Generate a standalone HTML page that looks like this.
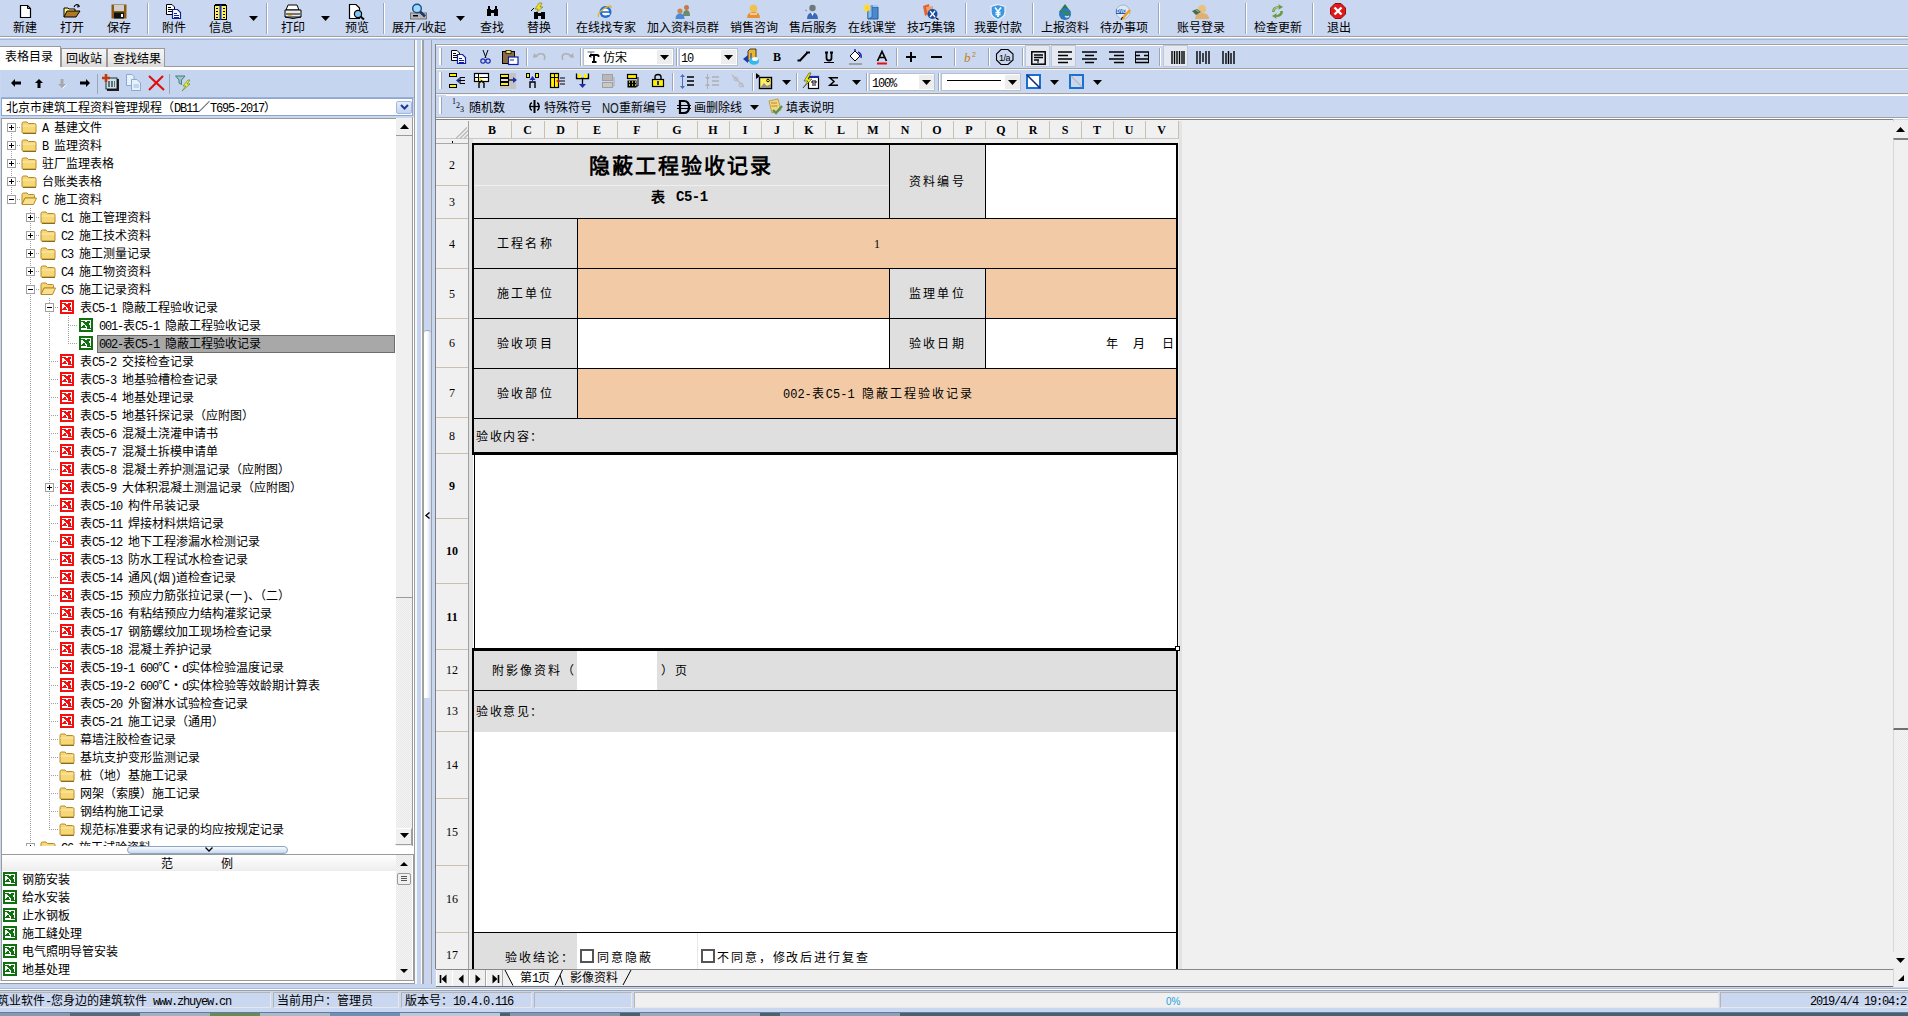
<!DOCTYPE html><html lang="zh-CN"><head><meta charset="utf-8"><style>
*{margin:0;padding:0;box-sizing:border-box}
html,body{width:1908px;height:1016px;overflow:hidden}
body{position:relative;background:#CAD7F0;font-family:"Liberation Sans",sans-serif;font-size:12px;color:#000;line-height:12px}
.a{position:absolute}
.t{white-space:nowrap;line-height:12px;margin-top:1px}
i.m{font-style:normal;font-family:"Liberation Mono",monospace;font-size:12px;letter-spacing:-1.2px}
svg{position:absolute;overflow:visible}
</style></head><body><div class="a" style="left:0px;top:0px;width:1908px;height:36px;background:#CAD7F0"></div>
<div class="a" style="left:0px;top:36px;width:1908px;height:1px;background:#A0A0A0"></div>
<div class="a" style="left:0px;top:37px;width:1908px;height:2px;background:#fff"></div>
<div class="a" style="left:0px;top:38px;width:1908px;height:6px;background:#C6D4EE"></div>
<div class="a" style="left:0px;top:39px;width:1908px;height:1px;background:#A8B8D8"></div>
<div class="a" style="left:0px;top:43px;width:1908px;height:1px;background:#CCDAF4"></div>
<div class="a t" style="left:13px;top:21px;">新建</div>
<div class="a t" style="left:60px;top:21px;">打开</div>
<div class="a t" style="left:107px;top:21px;">保存</div>
<div class="a t" style="left:162px;top:21px;">附件</div>
<div class="a t" style="left:209px;top:21px;">信息</div>
<div class="a t" style="left:281px;top:21px;">打印</div>
<div class="a t" style="left:345px;top:21px;">预览</div>
<div class="a t" style="left:392px;top:21px;">展开<i class="m">/</i>收起</div>
<div class="a t" style="left:480px;top:21px;">查找</div>
<div class="a t" style="left:527px;top:21px;">替换</div>
<div class="a t" style="left:576px;top:21px;">在线找专家</div>
<div class="a t" style="left:647px;top:21px;">加入资料员群</div>
<div class="a t" style="left:730px;top:21px;">销售咨询</div>
<div class="a t" style="left:789px;top:21px;">售后服务</div>
<div class="a t" style="left:848px;top:21px;">在线课堂</div>
<div class="a t" style="left:907px;top:21px;">技巧集锦</div>
<div class="a t" style="left:974px;top:21px;">我要付款</div>
<div class="a t" style="left:1041px;top:21px;">上报资料</div>
<div class="a t" style="left:1100px;top:21px;">待办事项</div>
<div class="a t" style="left:1177px;top:21px;">账号登录</div>
<div class="a t" style="left:1254px;top:21px;">检查更新</div>
<div class="a t" style="left:1327px;top:21px;">退出</div>
<div class="a" style="left:147px;top:3px;width:1px;height:31px;background:#9DA6B8;border-right:1px solid #fff;width:2px"></div>
<div class="a" style="left:266px;top:3px;width:1px;height:31px;background:#9DA6B8;border-right:1px solid #fff;width:2px"></div>
<div class="a" style="left:383px;top:3px;width:1px;height:31px;background:#9DA6B8;border-right:1px solid #fff;width:2px"></div>
<div class="a" style="left:566px;top:3px;width:1px;height:31px;background:#9DA6B8;border-right:1px solid #fff;width:2px"></div>
<div class="a" style="left:965px;top:3px;width:1px;height:31px;background:#9DA6B8;border-right:1px solid #fff;width:2px"></div>
<div class="a" style="left:1032px;top:3px;width:1px;height:31px;background:#9DA6B8;border-right:1px solid #fff;width:2px"></div>
<div class="a" style="left:1158px;top:3px;width:1px;height:31px;background:#9DA6B8;border-right:1px solid #fff;width:2px"></div>
<div class="a" style="left:1245px;top:3px;width:1px;height:31px;background:#9DA6B8;border-right:1px solid #fff;width:2px"></div>
<div class="a" style="left:1312px;top:3px;width:1px;height:31px;background:#9DA6B8;border-right:1px solid #fff;width:2px"></div>
<svg style="left:249px;top:16px" width="10" height="5"><path d="M0 0H9L4.5 5Z" fill="#000"/></svg>
<svg style="left:321px;top:16px" width="10" height="5"><path d="M0 0H9L4.5 5Z" fill="#000"/></svg>
<svg style="left:456px;top:16px" width="10" height="5"><path d="M0 0H9L4.5 5Z" fill="#000"/></svg>
<svg style="left:19px;top:4px" width="14" height="15" viewBox="0 0 14 15"><path d="M1.5 1.5H8.5L11.5 4.5V13.5H1.5Z" fill="#fff" stroke="#000" stroke-width="1.2"/><path d="M8.5 1.5V4.5H11.5" fill="none" stroke="#000" stroke-width="1"/></svg>
<svg style="left:63px;top:3px" width="18" height="16" viewBox="0 0 18 16"><path d="M11 4Q13 0 16 3" stroke="#000" stroke-width="1.2" fill="none"/><path d="M15 1.5L16.5 3.5L14 4" stroke="#000" stroke-width="1" fill="none"/><path d="M1 14V5H5L6 6H12V8" fill="#FFF37A" stroke="#000" stroke-width="1"/><path d="M1 14L4 8H17L13 14Z" fill="#B07820" stroke="#000" stroke-width="1"/></svg>
<svg style="left:111px;top:4px" width="16" height="15" viewBox="0 0 16 15"><rect x="0.5" y="0.5" width="15" height="14" fill="#8A5A10"/><rect x="3" y="1" width="10" height="6" fill="#CFCFCF"/><rect x="3" y="8.5" width="10" height="6" fill="#111"/><rect x="10" y="10" width="2" height="3" fill="#fff"/></svg>
<svg style="left:166px;top:4px" width="16" height="15" viewBox="0 0 16 15"><path d="M0.5 0.5H6L8.5 3V10.5H0.5Z" fill="#fff" stroke="#000"/><path d="M2 3.5H5M2 5.5H7M2 7.5H7" stroke="#000"/><path d="M6.5 5.5H11.5L14.5 8.5V14.5H6.5Z" fill="#fff" stroke="#1020A0" stroke-width="1.2"/><path d="M8 9.5H11M8 11.5H13M8 13.5H13" stroke="#1020A0"/></svg>
<svg style="left:214px;top:4px" width="13" height="16" viewBox="0 0 13 16"><rect x="0.5" y="1.5" width="12" height="14" fill="#FFF060" stroke="#000"/><rect x="5.5" y="1" width="2" height="15" fill="#1030C0"/><path d="M2 4.5H4M2 7.5H4M2 10.5H4M2 13.5H4M9 4.5H11M9 7.5H11M9 10.5H11M9 13.5H11" stroke="#000"/><path d="M1 0.5H12" stroke="#000"/></svg>
<svg style="left:284px;top:4px" width="18" height="16" viewBox="0 0 18 16"><path d="M4 1H13L15 6H2Z" fill="#fff" stroke="#000"/><path d="M1 6H17V13H1Z" fill="#E8E8E8" stroke="#000"/><path d="M2 10H16" stroke="#000"/><rect x="4" y="11" width="4" height="1" fill="#F0C000"/><path d="M1 13Q9 16 17 13" stroke="#000" fill="none"/></svg>
<svg style="left:348px;top:4px" width="18" height="16" viewBox="0 0 18 16"><path d="M1.5 0.5H8L11.5 4V14.5H1.5Z" fill="#fff" stroke="#000" stroke-width="1.2"/><circle cx="10" cy="10" r="3.6" fill="#7EC4F0" stroke="#000" stroke-width="1.2"/><path d="M12.5 12.5L16 15.5" stroke="#000" stroke-width="2"/></svg>
<svg style="left:410px;top:3px" width="18" height="17" viewBox="0 0 18 17"><rect x="0.5" y="10" width="16" height="6" fill="#B8B8B8" stroke="#777"/><rect x="3" y="12" width="5" height="1.5" fill="#000"/><circle cx="7" cy="5.5" r="4.3" fill="#9ED8FA" stroke="#1A4A8A" stroke-width="1.4"/><path d="M10 8.5L15 13.5" stroke="#1A3A6A" stroke-width="2.6"/></svg>
<svg style="left:486px;top:6px" width="13" height="11" viewBox="0 0 13 11"><path d="M1 3H5V10H1ZM8 3H12V10H8Z" fill="#000"/><rect x="2" y="0" width="2" height="3" fill="#000"/><rect x="9" y="0" width="2" height="3" fill="#000"/><rect x="4" y="4" width="5" height="3" fill="#000"/></svg>
<svg style="left:530px;top:3px" width="18" height="17" viewBox="0 0 18 17"><path d="M9 0L5 6H8L6 10L13 4H10L12 0Z" fill="#F0E020" stroke="#606000" stroke-width="0.5"/><path d="M4 9H8V16H4ZM11 9H15V16H11Z" fill="#000"/><rect x="7" y="10" width="5" height="3" fill="#000"/><path d="M1 8L4 5" stroke="#000"/></svg>
<svg style="left:597px;top:4px" width="16" height="15" viewBox="0 0 16 15"><circle cx="8.5" cy="8" r="6" fill="#1E6ED8"/><circle cx="8.5" cy="8" r="3.5" fill="#fff"/><rect x="5" y="7.2" width="7" height="1.6" fill="#1E6ED8"/><rect x="8.5" y="9" width="4" height="2" fill="#fff"/><path d="M1.5 13Q0 9 8 4Q15 0 14 4" stroke="#F0B020" stroke-width="1.4" fill="none"/></svg>
<svg style="left:675px;top:4px" width="16" height="15" viewBox="0 0 16 15"><circle cx="11.5" cy="3.5" r="2.5" fill="#C87848"/><path d="M8 12Q8 6 11.5 6Q15 6 15 12Z" fill="#6A8A6A"/><circle cx="5" cy="7" r="2.6" fill="#C8884A"/><path d="M0.5 15Q0.5 9.5 5 9.5Q9.5 9.5 9.5 15Z" fill="#4A8ADA"/></svg>
<svg style="left:746px;top:4px" width="15" height="15" viewBox="0 0 15 15"><circle cx="7.5" cy="4.5" r="3.8" fill="#F0C050"/><path d="M1 14Q1 8 7.5 8Q14 8 14 14Z" fill="#E89030"/><path d="M4 10H11" stroke="#fff" stroke-width="1"/></svg>
<svg style="left:805px;top:4px" width="14" height="16" viewBox="0 0 14 16"><circle cx="7.5" cy="4" r="3.2" fill="#6A7A7A"/><path d="M2 15Q2 8.5 7.5 8.5Q13 8.5 13 15Z" fill="#3A6AB8"/><path d="M6 8.5L7.5 12L9 8.5" fill="#fff"/><path d="M0 6L2 7" stroke="#888"/></svg>
<svg style="left:863px;top:4px" width="16" height="16" viewBox="0 0 16 16"><path d="M5 3H15V15H5Z" fill="#4A8AD0" stroke="#2A5A98"/><path d="M5 3L9 1H15V3" fill="#9AC8F0"/><path d="M5 3V15L9 13V1" fill="#8AC0F0" stroke="#2A5A98" stroke-width="0.7"/><circle cx="4" cy="4" r="3" fill="#FFE060"/><path d="M0 4H8M4 0V8M1 1L7 7M7 1L1 7" stroke="#FFD000" stroke-width="0.8"/></svg>
<svg style="left:922px;top:4px" width="17" height="16" viewBox="0 0 17 16"><path d="M1 2L7 0L8 9L3 12Z" fill="#E86030"/><path d="M4 3L11 2L11 11L6 12Z" fill="#E8A070"/><circle cx="10.5" cy="10" r="5" fill="#1A4AA0"/><path d="M8 7L13 13M13 7L8 13" stroke="#fff" stroke-width="1.2"/><path d="M14 14L16.5 15.5" stroke="#000" stroke-width="1.4"/></svg>
<svg style="left:990px;top:4px" width="16" height="16" viewBox="0 0 16 16"><path d="M8 0.5L15 2.5V8Q15 13 8 15.5Q1 13 1 8V2.5Z" fill="#3A98E0" stroke="#E8F0F8" stroke-width="1.3"/><path d="M5 3.5L8 7.5L11 3.5M8 7.5V13M5.5 8.5H10.5M5.5 10.5H10.5" stroke="#fff" stroke-width="1.6" fill="none"/></svg>
<svg style="left:1057px;top:4px" width="16" height="16" viewBox="0 0 16 16"><path d="M8 0L14 8H2Z" fill="#2A7A40"/><circle cx="8" cy="10" r="6" fill="#2A78C8"/><path d="M3 8Q6 6 8 9Q10 12 13 9" fill="#3A8A3A" stroke="#3A8A3A" stroke-width="2"/><path d="M8 12Q10 14 12 12" stroke="#E0E0E0" stroke-width="1.2" fill="none"/></svg>
<svg style="left:1115px;top:4px" width="17" height="16" viewBox="0 0 17 16"><circle cx="8" cy="8" r="7" fill="#E0E8F0" stroke="#A0B8D0"/><rect x="1" y="5" width="10" height="5" fill="#1E58B8"/><text x="1.6" y="9.3" font-size="4.6" font-family="Liberation Sans" font-weight="bold" fill="#fff">DVD</text><path d="M7 15L15 6" stroke="#F0A020" stroke-width="2.6"/><path d="M6 16L7.5 13" stroke="#000"/></svg>
<svg style="left:1192px;top:4px" width="17" height="16" viewBox="0 0 17 16"><circle cx="10" cy="5" r="4" fill="#E8C080"/><path d="M3 15Q3 9 10 9Q17 9 17 15Z" fill="#E0B070"/><path d="M0 7L5 5L9 8L4 11Z" fill="#4A6A4A"/><path d="M4 6L7 8" stroke="#9AC09A"/></svg>
<svg style="left:1270px;top:4px" width="15" height="15" viewBox="0 0 15 15"><path d="M2 8Q2 2 9 2L8 0L13 3L8 6L9 4Q5 4 4.5 8Z" fill="#6A9A40"/><path d="M13 7Q13 13 6 13L7 15L2 12L7 9L6 11Q10 11 10.5 7Z" fill="#6A9A40"/><path d="M3 7Q4 3 9 3" stroke="#B8D890" stroke-width="0.8" fill="none"/></svg>
<svg style="left:1330px;top:3px" width="16" height="17" viewBox="0 0 16 17"><path d="M5 0.5H11L15.5 5V11L11 15.5H5L0.5 11V5Z" fill="#E01818" stroke="#901010"/><path d="M4.5 4.5L11.5 11.5M11.5 4.5L4.5 11.5" stroke="#fff" stroke-width="2.4"/></svg>
<div class="a" style="left:0px;top:40px;width:414px;height:950px;background:#CAD7F0"></div>
<div class="a" style="left:0px;top:46px;width:61px;height:21px;background:#fff;border-top:1px solid #9A9A9A;border-right:1px solid #9A9A9A"></div>
<div class="a t" style="left:5px;top:50px;">表格目录</div>
<div class="a" style="left:61px;top:48px;width:46px;height:19px;background:linear-gradient(#F4F4F4,#EAEAEA 60%,#D8D8D8);border:1px solid #9A9A9A;border-bottom:none"></div>
<div class="a t" style="left:66px;top:52px;">回收站</div>
<div class="a" style="left:107px;top:48px;width:58px;height:19px;background:linear-gradient(#F4F4F4,#EAEAEA 60%,#D8D8D8);border:1px solid #9A9A9A;border-bottom:none"></div>
<div class="a t" style="left:113px;top:52px;">查找结果</div>
<div class="a" style="left:165px;top:66px;width:249px;height:1px;background:#9A9A9A"></div>
<div class="a" style="left:0px;top:67px;width:414px;height:3px;background:#fff"></div>
<div class="a" style="left:1px;top:70px;width:413px;height:27px;background:#C6D5EF"></div>
<div class="a" style="left:97px;top:74px;width:1px;height:20px;background:#9DA6B8"></div>
<div class="a" style="left:169px;top:74px;width:1px;height:20px;background:#9DA6B8"></div>
<svg style="left:11px;top:79px" width="10" height="8" viewBox="0 0 10 8"><path d="M0 4L4 0V2.5H10V5.5H4V8Z" fill="#000"/></svg>
<svg style="left:35px;top:79px" width="8" height="9" viewBox="0 0 8 9"><path d="M4 0L8 4H5.5V9H2.5V4H0Z" fill="#000"/></svg>
<svg style="left:58px;top:79px" width="9" height="10" viewBox="0 0 9 10"><path d="M4 9L8 5H5.5V0H2.5V5H0Z" fill="#A8A8A8"/><path d="M4.5 9.5L8.5 5.5" stroke="#fff"/></svg>
<svg style="left:80px;top:79px" width="10" height="8" viewBox="0 0 10 8"><path d="M10 4L6 0V2.5H0V5.5H6V8Z" fill="#000"/></svg>
<svg style="left:102px;top:74px" width="18" height="17" viewBox="0 0 18 17"><rect x="5" y="5" width="12" height="12" fill="#202020"/><rect x="4" y="4" width="11" height="11" fill="#C8E0E8" stroke="#000" stroke-width="0.8"/><path d="M6 8H13M6 10H13M6 12H13" stroke="#000" stroke-width="1.2" stroke-dasharray="2 1"/><path d="M0 4H8M4 0V8" stroke="#C03A10" stroke-width="2.6"/></svg>
<svg style="left:126px;top:74px" width="16" height="17" viewBox="0 0 16 17"><path d="M0.5 0.5H6L8 2.5V11.5H0.5Z" fill="#E8F0FA" stroke="#8AA8D0"/><path d="M5.5 5.5H11L14.5 9V16.5H5.5Z" fill="#E8F0FA" stroke="#8AA8D0"/><path d="M7.5 11H13M7.5 13H13" stroke="#90C0E8" stroke-width="1.2"/></svg>
<svg style="left:148px;top:75px" width="17" height="16" viewBox="0 0 17 16"><path d="M1 1L16 15M15 1L1 15" stroke="#E01010" stroke-width="2.2"/></svg>
<svg style="left:175px;top:75px" width="17" height="16" viewBox="0 0 17 16"><path d="M0.5 1H10L6.5 5V9.5L4 8V5Z" fill="#98C8C8" stroke="#4A7A7A"/><path d="M13 5L8 11H11L7 16L15 9H12L15 5Z" fill="#F0F040" stroke="#6A8A20" stroke-width="0.7"/></svg>
<div class="a" style="left:1px;top:97px;width:413px;height:1px;background:#9AB0D8"></div>
<div class="a" style="left:1px;top:98px;width:412px;height:18px;background:#fff;border:1px solid #8CA6D0"></div>
<div class="a t" style="left:6px;top:101px;">北京市建筑工程资料管理规程（<i class="m">DB11</i>／<i class="m">T695-2017</i>）</div>
<div class="a" style="left:396px;top:101px;width:16px;height:13px;background:linear-gradient(#E6EEFA,#C2D3EE);border:1px solid #A4B9DC;border-radius:2px"></div>
<svg style="left:400px;top:104px" width="9" height="6"><path d="M1 1L4.5 4.5L8 1" stroke="#1A3A9A" stroke-width="2" fill="none"/></svg>
<div class="a" style="left:1px;top:118px;width:413px;height:728px;background:#fff;border:1px solid #9A9A9A;border-bottom:none"></div>
<div class="a" style="left:2px;top:119px;width:394px;height:727px;overflow:hidden">
<div class="a" style="left:-2px;top:-119px;width:400px;height:1000px">
<div class="a" style="left:11px;top:127px;width:1px;height:18px;background:repeating-linear-gradient(#A0A0A0 0 1px,transparent 1px 2px)"></div>
<div class="a" style="left:11px;top:127px;width:9px;height:1px;background:repeating-linear-gradient(90deg,#A0A0A0 0 1px,transparent 1px 2px)"></div>
<div class="a" style="left:11px;top:145px;width:1px;height:18px;background:repeating-linear-gradient(#A0A0A0 0 1px,transparent 1px 2px)"></div>
<div class="a" style="left:11px;top:145px;width:9px;height:1px;background:repeating-linear-gradient(90deg,#A0A0A0 0 1px,transparent 1px 2px)"></div>
<div class="a" style="left:11px;top:163px;width:1px;height:18px;background:repeating-linear-gradient(#A0A0A0 0 1px,transparent 1px 2px)"></div>
<div class="a" style="left:11px;top:163px;width:9px;height:1px;background:repeating-linear-gradient(90deg,#A0A0A0 0 1px,transparent 1px 2px)"></div>
<div class="a" style="left:11px;top:181px;width:1px;height:18px;background:repeating-linear-gradient(#A0A0A0 0 1px,transparent 1px 2px)"></div>
<div class="a" style="left:11px;top:181px;width:9px;height:1px;background:repeating-linear-gradient(90deg,#A0A0A0 0 1px,transparent 1px 2px)"></div>
<div class="a" style="left:11px;top:199px;width:9px;height:1px;background:repeating-linear-gradient(90deg,#A0A0A0 0 1px,transparent 1px 2px)"></div>
<div class="a" style="left:30px;top:217px;width:1px;height:18px;background:repeating-linear-gradient(#A0A0A0 0 1px,transparent 1px 2px)"></div>
<div class="a" style="left:30px;top:208px;width:1px;height:9px;background:repeating-linear-gradient(#A0A0A0 0 1px,transparent 1px 2px)"></div>
<div class="a" style="left:30px;top:217px;width:9px;height:1px;background:repeating-linear-gradient(90deg,#A0A0A0 0 1px,transparent 1px 2px)"></div>
<div class="a" style="left:30px;top:235px;width:1px;height:18px;background:repeating-linear-gradient(#A0A0A0 0 1px,transparent 1px 2px)"></div>
<div class="a" style="left:30px;top:235px;width:9px;height:1px;background:repeating-linear-gradient(90deg,#A0A0A0 0 1px,transparent 1px 2px)"></div>
<div class="a" style="left:30px;top:253px;width:1px;height:18px;background:repeating-linear-gradient(#A0A0A0 0 1px,transparent 1px 2px)"></div>
<div class="a" style="left:30px;top:253px;width:9px;height:1px;background:repeating-linear-gradient(90deg,#A0A0A0 0 1px,transparent 1px 2px)"></div>
<div class="a" style="left:30px;top:271px;width:1px;height:18px;background:repeating-linear-gradient(#A0A0A0 0 1px,transparent 1px 2px)"></div>
<div class="a" style="left:30px;top:271px;width:9px;height:1px;background:repeating-linear-gradient(90deg,#A0A0A0 0 1px,transparent 1px 2px)"></div>
<div class="a" style="left:30px;top:289px;width:1px;height:558px;background:repeating-linear-gradient(#A0A0A0 0 1px,transparent 1px 2px)"></div>
<div class="a" style="left:30px;top:289px;width:9px;height:1px;background:repeating-linear-gradient(90deg,#A0A0A0 0 1px,transparent 1px 2px)"></div>
<div class="a" style="left:49px;top:307px;width:1px;height:54px;background:repeating-linear-gradient(#A0A0A0 0 1px,transparent 1px 2px)"></div>
<div class="a" style="left:49px;top:298px;width:1px;height:9px;background:repeating-linear-gradient(#A0A0A0 0 1px,transparent 1px 2px)"></div>
<div class="a" style="left:49px;top:307px;width:9px;height:1px;background:repeating-linear-gradient(90deg,#A0A0A0 0 1px,transparent 1px 2px)"></div>
<div class="a" style="left:68px;top:325px;width:1px;height:18px;background:repeating-linear-gradient(#A0A0A0 0 1px,transparent 1px 2px)"></div>
<div class="a" style="left:68px;top:316px;width:1px;height:9px;background:repeating-linear-gradient(#A0A0A0 0 1px,transparent 1px 2px)"></div>
<div class="a" style="left:68px;top:325px;width:9px;height:1px;background:repeating-linear-gradient(90deg,#A0A0A0 0 1px,transparent 1px 2px)"></div>
<div class="a" style="left:68px;top:343px;width:9px;height:1px;background:repeating-linear-gradient(90deg,#A0A0A0 0 1px,transparent 1px 2px)"></div>
<div class="a" style="left:49px;top:361px;width:1px;height:18px;background:repeating-linear-gradient(#A0A0A0 0 1px,transparent 1px 2px)"></div>
<div class="a" style="left:49px;top:361px;width:9px;height:1px;background:repeating-linear-gradient(90deg,#A0A0A0 0 1px,transparent 1px 2px)"></div>
<div class="a" style="left:49px;top:379px;width:1px;height:18px;background:repeating-linear-gradient(#A0A0A0 0 1px,transparent 1px 2px)"></div>
<div class="a" style="left:49px;top:379px;width:9px;height:1px;background:repeating-linear-gradient(90deg,#A0A0A0 0 1px,transparent 1px 2px)"></div>
<div class="a" style="left:49px;top:397px;width:1px;height:18px;background:repeating-linear-gradient(#A0A0A0 0 1px,transparent 1px 2px)"></div>
<div class="a" style="left:49px;top:397px;width:9px;height:1px;background:repeating-linear-gradient(90deg,#A0A0A0 0 1px,transparent 1px 2px)"></div>
<div class="a" style="left:49px;top:415px;width:1px;height:18px;background:repeating-linear-gradient(#A0A0A0 0 1px,transparent 1px 2px)"></div>
<div class="a" style="left:49px;top:415px;width:9px;height:1px;background:repeating-linear-gradient(90deg,#A0A0A0 0 1px,transparent 1px 2px)"></div>
<div class="a" style="left:49px;top:433px;width:1px;height:18px;background:repeating-linear-gradient(#A0A0A0 0 1px,transparent 1px 2px)"></div>
<div class="a" style="left:49px;top:433px;width:9px;height:1px;background:repeating-linear-gradient(90deg,#A0A0A0 0 1px,transparent 1px 2px)"></div>
<div class="a" style="left:49px;top:451px;width:1px;height:18px;background:repeating-linear-gradient(#A0A0A0 0 1px,transparent 1px 2px)"></div>
<div class="a" style="left:49px;top:451px;width:9px;height:1px;background:repeating-linear-gradient(90deg,#A0A0A0 0 1px,transparent 1px 2px)"></div>
<div class="a" style="left:49px;top:469px;width:1px;height:18px;background:repeating-linear-gradient(#A0A0A0 0 1px,transparent 1px 2px)"></div>
<div class="a" style="left:49px;top:469px;width:9px;height:1px;background:repeating-linear-gradient(90deg,#A0A0A0 0 1px,transparent 1px 2px)"></div>
<div class="a" style="left:49px;top:487px;width:1px;height:18px;background:repeating-linear-gradient(#A0A0A0 0 1px,transparent 1px 2px)"></div>
<div class="a" style="left:49px;top:487px;width:9px;height:1px;background:repeating-linear-gradient(90deg,#A0A0A0 0 1px,transparent 1px 2px)"></div>
<div class="a" style="left:49px;top:505px;width:1px;height:18px;background:repeating-linear-gradient(#A0A0A0 0 1px,transparent 1px 2px)"></div>
<div class="a" style="left:49px;top:505px;width:9px;height:1px;background:repeating-linear-gradient(90deg,#A0A0A0 0 1px,transparent 1px 2px)"></div>
<div class="a" style="left:49px;top:523px;width:1px;height:18px;background:repeating-linear-gradient(#A0A0A0 0 1px,transparent 1px 2px)"></div>
<div class="a" style="left:49px;top:523px;width:9px;height:1px;background:repeating-linear-gradient(90deg,#A0A0A0 0 1px,transparent 1px 2px)"></div>
<div class="a" style="left:49px;top:541px;width:1px;height:18px;background:repeating-linear-gradient(#A0A0A0 0 1px,transparent 1px 2px)"></div>
<div class="a" style="left:49px;top:541px;width:9px;height:1px;background:repeating-linear-gradient(90deg,#A0A0A0 0 1px,transparent 1px 2px)"></div>
<div class="a" style="left:49px;top:559px;width:1px;height:18px;background:repeating-linear-gradient(#A0A0A0 0 1px,transparent 1px 2px)"></div>
<div class="a" style="left:49px;top:559px;width:9px;height:1px;background:repeating-linear-gradient(90deg,#A0A0A0 0 1px,transparent 1px 2px)"></div>
<div class="a" style="left:49px;top:577px;width:1px;height:18px;background:repeating-linear-gradient(#A0A0A0 0 1px,transparent 1px 2px)"></div>
<div class="a" style="left:49px;top:577px;width:9px;height:1px;background:repeating-linear-gradient(90deg,#A0A0A0 0 1px,transparent 1px 2px)"></div>
<div class="a" style="left:49px;top:595px;width:1px;height:18px;background:repeating-linear-gradient(#A0A0A0 0 1px,transparent 1px 2px)"></div>
<div class="a" style="left:49px;top:595px;width:9px;height:1px;background:repeating-linear-gradient(90deg,#A0A0A0 0 1px,transparent 1px 2px)"></div>
<div class="a" style="left:49px;top:613px;width:1px;height:18px;background:repeating-linear-gradient(#A0A0A0 0 1px,transparent 1px 2px)"></div>
<div class="a" style="left:49px;top:613px;width:9px;height:1px;background:repeating-linear-gradient(90deg,#A0A0A0 0 1px,transparent 1px 2px)"></div>
<div class="a" style="left:49px;top:631px;width:1px;height:18px;background:repeating-linear-gradient(#A0A0A0 0 1px,transparent 1px 2px)"></div>
<div class="a" style="left:49px;top:631px;width:9px;height:1px;background:repeating-linear-gradient(90deg,#A0A0A0 0 1px,transparent 1px 2px)"></div>
<div class="a" style="left:49px;top:649px;width:1px;height:18px;background:repeating-linear-gradient(#A0A0A0 0 1px,transparent 1px 2px)"></div>
<div class="a" style="left:49px;top:649px;width:9px;height:1px;background:repeating-linear-gradient(90deg,#A0A0A0 0 1px,transparent 1px 2px)"></div>
<div class="a" style="left:49px;top:667px;width:1px;height:18px;background:repeating-linear-gradient(#A0A0A0 0 1px,transparent 1px 2px)"></div>
<div class="a" style="left:49px;top:667px;width:9px;height:1px;background:repeating-linear-gradient(90deg,#A0A0A0 0 1px,transparent 1px 2px)"></div>
<div class="a" style="left:49px;top:685px;width:1px;height:18px;background:repeating-linear-gradient(#A0A0A0 0 1px,transparent 1px 2px)"></div>
<div class="a" style="left:49px;top:685px;width:9px;height:1px;background:repeating-linear-gradient(90deg,#A0A0A0 0 1px,transparent 1px 2px)"></div>
<div class="a" style="left:49px;top:703px;width:1px;height:18px;background:repeating-linear-gradient(#A0A0A0 0 1px,transparent 1px 2px)"></div>
<div class="a" style="left:49px;top:703px;width:9px;height:1px;background:repeating-linear-gradient(90deg,#A0A0A0 0 1px,transparent 1px 2px)"></div>
<div class="a" style="left:49px;top:721px;width:1px;height:18px;background:repeating-linear-gradient(#A0A0A0 0 1px,transparent 1px 2px)"></div>
<div class="a" style="left:49px;top:721px;width:9px;height:1px;background:repeating-linear-gradient(90deg,#A0A0A0 0 1px,transparent 1px 2px)"></div>
<div class="a" style="left:49px;top:739px;width:1px;height:18px;background:repeating-linear-gradient(#A0A0A0 0 1px,transparent 1px 2px)"></div>
<div class="a" style="left:49px;top:739px;width:9px;height:1px;background:repeating-linear-gradient(90deg,#A0A0A0 0 1px,transparent 1px 2px)"></div>
<div class="a" style="left:49px;top:757px;width:1px;height:18px;background:repeating-linear-gradient(#A0A0A0 0 1px,transparent 1px 2px)"></div>
<div class="a" style="left:49px;top:757px;width:9px;height:1px;background:repeating-linear-gradient(90deg,#A0A0A0 0 1px,transparent 1px 2px)"></div>
<div class="a" style="left:49px;top:775px;width:1px;height:18px;background:repeating-linear-gradient(#A0A0A0 0 1px,transparent 1px 2px)"></div>
<div class="a" style="left:49px;top:775px;width:9px;height:1px;background:repeating-linear-gradient(90deg,#A0A0A0 0 1px,transparent 1px 2px)"></div>
<div class="a" style="left:49px;top:793px;width:1px;height:18px;background:repeating-linear-gradient(#A0A0A0 0 1px,transparent 1px 2px)"></div>
<div class="a" style="left:49px;top:793px;width:9px;height:1px;background:repeating-linear-gradient(90deg,#A0A0A0 0 1px,transparent 1px 2px)"></div>
<div class="a" style="left:49px;top:811px;width:1px;height:18px;background:repeating-linear-gradient(#A0A0A0 0 1px,transparent 1px 2px)"></div>
<div class="a" style="left:49px;top:811px;width:9px;height:1px;background:repeating-linear-gradient(90deg,#A0A0A0 0 1px,transparent 1px 2px)"></div>
<div class="a" style="left:49px;top:829px;width:9px;height:1px;background:repeating-linear-gradient(90deg,#A0A0A0 0 1px,transparent 1px 2px)"></div>
<div class="a" style="left:30px;top:847px;width:9px;height:1px;background:repeating-linear-gradient(90deg,#A0A0A0 0 1px,transparent 1px 2px)"></div>
<div class="a" style="left:7px;top:123px;width:9px;height:9px;background:#fff;border:1px solid #A0A0A0"></div>
<div class="a" style="left:9px;top:127px;width:5px;height:1px;background:#000"></div>
<div class="a" style="left:11px;top:125px;width:1px;height:5px;background:#000"></div>
<svg style="left:21px;top:121px" width="16" height="13" viewBox="0 0 16 13"><path d="M1 2.5Q1 1 2.5 1H6L7.5 2.5H13.5Q15 2.5 15 4V11Q15 12 14 12H2Q1 12 1 11Z" fill="#F6D776" stroke="#B58A2A" stroke-width="1"/><path d="M1.5 5H14.5" stroke="#FBEBB0" stroke-width="1"/><path d="M2 12.5H15" stroke="#8A6A20" stroke-width="1"/></svg>
<div class="a t" style="left:42px;top:121px"><i class="m">A&nbsp;</i>基建文件</div>
<div class="a" style="left:7px;top:141px;width:9px;height:9px;background:#fff;border:1px solid #A0A0A0"></div>
<div class="a" style="left:9px;top:145px;width:5px;height:1px;background:#000"></div>
<div class="a" style="left:11px;top:143px;width:1px;height:5px;background:#000"></div>
<svg style="left:21px;top:139px" width="16" height="13" viewBox="0 0 16 13"><path d="M1 2.5Q1 1 2.5 1H6L7.5 2.5H13.5Q15 2.5 15 4V11Q15 12 14 12H2Q1 12 1 11Z" fill="#F6D776" stroke="#B58A2A" stroke-width="1"/><path d="M1.5 5H14.5" stroke="#FBEBB0" stroke-width="1"/><path d="M2 12.5H15" stroke="#8A6A20" stroke-width="1"/></svg>
<div class="a t" style="left:42px;top:139px"><i class="m">B&nbsp;</i>监理资料</div>
<div class="a" style="left:7px;top:159px;width:9px;height:9px;background:#fff;border:1px solid #A0A0A0"></div>
<div class="a" style="left:9px;top:163px;width:5px;height:1px;background:#000"></div>
<div class="a" style="left:11px;top:161px;width:1px;height:5px;background:#000"></div>
<svg style="left:21px;top:157px" width="16" height="13" viewBox="0 0 16 13"><path d="M1 2.5Q1 1 2.5 1H6L7.5 2.5H13.5Q15 2.5 15 4V11Q15 12 14 12H2Q1 12 1 11Z" fill="#F6D776" stroke="#B58A2A" stroke-width="1"/><path d="M1.5 5H14.5" stroke="#FBEBB0" stroke-width="1"/><path d="M2 12.5H15" stroke="#8A6A20" stroke-width="1"/></svg>
<div class="a t" style="left:42px;top:157px">驻厂监理表格</div>
<div class="a" style="left:7px;top:177px;width:9px;height:9px;background:#fff;border:1px solid #A0A0A0"></div>
<div class="a" style="left:9px;top:181px;width:5px;height:1px;background:#000"></div>
<div class="a" style="left:11px;top:179px;width:1px;height:5px;background:#000"></div>
<svg style="left:21px;top:175px" width="16" height="13" viewBox="0 0 16 13"><path d="M1 2.5Q1 1 2.5 1H6L7.5 2.5H13.5Q15 2.5 15 4V11Q15 12 14 12H2Q1 12 1 11Z" fill="#F6D776" stroke="#B58A2A" stroke-width="1"/><path d="M1.5 5H14.5" stroke="#FBEBB0" stroke-width="1"/><path d="M2 12.5H15" stroke="#8A6A20" stroke-width="1"/></svg>
<div class="a t" style="left:42px;top:175px">台账类表格</div>
<div class="a" style="left:7px;top:195px;width:9px;height:9px;background:#fff;border:1px solid #A0A0A0"></div>
<div class="a" style="left:9px;top:199px;width:5px;height:1px;background:#000"></div>
<svg style="left:21px;top:192px" width="16" height="14" viewBox="0 0 16 14"><path d="M1 2.5Q1 1 2.5 1H6L7.5 2.5H12.5Q13.5 2.5 13.5 3.5V6H4L1 12Z" fill="#F6D776" stroke="#B58A2A" stroke-width="1"/><path d="M4 6H15.5L12.5 12.5H1Z" fill="#F9E08E" stroke="#B58A2A" stroke-width="1"/></svg>
<div class="a t" style="left:42px;top:193px"><i class="m">C&nbsp;</i>施工资料</div>
<div class="a" style="left:26px;top:213px;width:9px;height:9px;background:#fff;border:1px solid #A0A0A0"></div>
<div class="a" style="left:28px;top:217px;width:5px;height:1px;background:#000"></div>
<div class="a" style="left:30px;top:215px;width:1px;height:5px;background:#000"></div>
<svg style="left:40px;top:211px" width="16" height="13" viewBox="0 0 16 13"><path d="M1 2.5Q1 1 2.5 1H6L7.5 2.5H13.5Q15 2.5 15 4V11Q15 12 14 12H2Q1 12 1 11Z" fill="#F6D776" stroke="#B58A2A" stroke-width="1"/><path d="M1.5 5H14.5" stroke="#FBEBB0" stroke-width="1"/><path d="M2 12.5H15" stroke="#8A6A20" stroke-width="1"/></svg>
<div class="a t" style="left:61px;top:211px"><i class="m">C1&nbsp;</i>施工管理资料</div>
<div class="a" style="left:26px;top:231px;width:9px;height:9px;background:#fff;border:1px solid #A0A0A0"></div>
<div class="a" style="left:28px;top:235px;width:5px;height:1px;background:#000"></div>
<div class="a" style="left:30px;top:233px;width:1px;height:5px;background:#000"></div>
<svg style="left:40px;top:229px" width="16" height="13" viewBox="0 0 16 13"><path d="M1 2.5Q1 1 2.5 1H6L7.5 2.5H13.5Q15 2.5 15 4V11Q15 12 14 12H2Q1 12 1 11Z" fill="#F6D776" stroke="#B58A2A" stroke-width="1"/><path d="M1.5 5H14.5" stroke="#FBEBB0" stroke-width="1"/><path d="M2 12.5H15" stroke="#8A6A20" stroke-width="1"/></svg>
<div class="a t" style="left:61px;top:229px"><i class="m">C2&nbsp;</i>施工技术资料</div>
<div class="a" style="left:26px;top:249px;width:9px;height:9px;background:#fff;border:1px solid #A0A0A0"></div>
<div class="a" style="left:28px;top:253px;width:5px;height:1px;background:#000"></div>
<div class="a" style="left:30px;top:251px;width:1px;height:5px;background:#000"></div>
<svg style="left:40px;top:247px" width="16" height="13" viewBox="0 0 16 13"><path d="M1 2.5Q1 1 2.5 1H6L7.5 2.5H13.5Q15 2.5 15 4V11Q15 12 14 12H2Q1 12 1 11Z" fill="#F6D776" stroke="#B58A2A" stroke-width="1"/><path d="M1.5 5H14.5" stroke="#FBEBB0" stroke-width="1"/><path d="M2 12.5H15" stroke="#8A6A20" stroke-width="1"/></svg>
<div class="a t" style="left:61px;top:247px"><i class="m">C3&nbsp;</i>施工测量记录</div>
<div class="a" style="left:26px;top:267px;width:9px;height:9px;background:#fff;border:1px solid #A0A0A0"></div>
<div class="a" style="left:28px;top:271px;width:5px;height:1px;background:#000"></div>
<div class="a" style="left:30px;top:269px;width:1px;height:5px;background:#000"></div>
<svg style="left:40px;top:265px" width="16" height="13" viewBox="0 0 16 13"><path d="M1 2.5Q1 1 2.5 1H6L7.5 2.5H13.5Q15 2.5 15 4V11Q15 12 14 12H2Q1 12 1 11Z" fill="#F6D776" stroke="#B58A2A" stroke-width="1"/><path d="M1.5 5H14.5" stroke="#FBEBB0" stroke-width="1"/><path d="M2 12.5H15" stroke="#8A6A20" stroke-width="1"/></svg>
<div class="a t" style="left:61px;top:265px"><i class="m">C4&nbsp;</i>施工物资资料</div>
<div class="a" style="left:26px;top:285px;width:9px;height:9px;background:#fff;border:1px solid #A0A0A0"></div>
<div class="a" style="left:28px;top:289px;width:5px;height:1px;background:#000"></div>
<svg style="left:40px;top:282px" width="16" height="14" viewBox="0 0 16 14"><path d="M1 2.5Q1 1 2.5 1H6L7.5 2.5H12.5Q13.5 2.5 13.5 3.5V6H4L1 12Z" fill="#F6D776" stroke="#B58A2A" stroke-width="1"/><path d="M4 6H15.5L12.5 12.5H1Z" fill="#F9E08E" stroke="#B58A2A" stroke-width="1"/></svg>
<div class="a t" style="left:61px;top:283px"><i class="m">C5&nbsp;</i>施工记录资料</div>
<div class="a" style="left:45px;top:303px;width:9px;height:9px;background:#fff;border:1px solid #A0A0A0"></div>
<div class="a" style="left:47px;top:307px;width:5px;height:1px;background:#000"></div>
<svg style="left:60px;top:300px" width="14" height="14" viewBox="0 0 14 14" shape-rendering="crispEdges"><rect x="0" y="0" width="14" height="14" fill="#F01010"/><rect x="2" y="2" width="10" height="10" fill="#fff"/><path d="M2 3h1v1h-1zM3 3h1v1h-1zM4 3h1v1h-1zM5 3h1v1h-1zM8 3h1v1h-1zM9 3h1v1h-1zM10 3h1v1h-1zM4 4h1v1h-1zM5 4h1v1h-1zM6 4h1v1h-1zM7 4h1v1h-1zM8 4h1v1h-1zM9 4h1v1h-1zM10 4h1v1h-1zM5 5h1v1h-1zM6 5h1v1h-1zM7 5h1v1h-1zM8 5h1v1h-1zM9 5h1v1h-1zM6 6h1v1h-1zM7 6h1v1h-1zM8 6h1v1h-1zM9 6h1v1h-1zM4 7h1v1h-1zM5 7h1v1h-1zM7 7h1v1h-1zM8 7h1v1h-1zM9 7h1v1h-1zM10 7h1v1h-1zM3 8h1v1h-1zM4 8h1v1h-1zM5 8h1v1h-1zM8 8h1v1h-1zM9 8h1v1h-1zM10 8h1v1h-1zM2 9h1v1h-1zM3 9h1v1h-1zM4 9h1v1h-1zM5 9h1v1h-1zM6 9h1v1h-1zM8 9h1v1h-1zM9 9h1v1h-1zM10 9h1v1h-1zM8 10h1v1h-1zM9 10h1v1h-1zM10 10h1v1h-1zM11 10h1v1h-1z" fill="#F01010"/></svg>
<div class="a t" style="left:80px;top:301px">表<i class="m">C5-1&nbsp;</i>隐蔽工程验收记录</div>
<svg style="left:79px;top:318px" width="14" height="14" viewBox="0 0 14 14" shape-rendering="crispEdges"><rect x="0" y="0" width="14" height="14" fill="#107010"/><rect x="2" y="2" width="10" height="10" fill="#fff"/><path d="M2 3h1v1h-1zM3 3h1v1h-1zM4 3h1v1h-1zM5 3h1v1h-1zM8 3h1v1h-1zM9 3h1v1h-1zM10 3h1v1h-1zM4 4h1v1h-1zM5 4h1v1h-1zM6 4h1v1h-1zM7 4h1v1h-1zM8 4h1v1h-1zM9 4h1v1h-1zM10 4h1v1h-1zM5 5h1v1h-1zM6 5h1v1h-1zM7 5h1v1h-1zM8 5h1v1h-1zM9 5h1v1h-1zM6 6h1v1h-1zM7 6h1v1h-1zM8 6h1v1h-1zM9 6h1v1h-1zM4 7h1v1h-1zM5 7h1v1h-1zM7 7h1v1h-1zM8 7h1v1h-1zM9 7h1v1h-1zM10 7h1v1h-1zM3 8h1v1h-1zM4 8h1v1h-1zM5 8h1v1h-1zM8 8h1v1h-1zM9 8h1v1h-1zM10 8h1v1h-1zM2 9h1v1h-1zM3 9h1v1h-1zM4 9h1v1h-1zM5 9h1v1h-1zM6 9h1v1h-1zM8 9h1v1h-1zM9 9h1v1h-1zM10 9h1v1h-1zM8 10h1v1h-1zM9 10h1v1h-1zM10 10h1v1h-1zM11 10h1v1h-1z" fill="#107010"/></svg>
<div class="a t" style="left:99px;top:319px"><i class="m">001-</i>表<i class="m">C5-1&nbsp;</i>隐蔽工程验收记录</div>
<svg style="left:79px;top:336px" width="14" height="14" viewBox="0 0 14 14" shape-rendering="crispEdges"><rect x="0" y="0" width="14" height="14" fill="#107010"/><rect x="2" y="2" width="10" height="10" fill="#fff"/><path d="M2 3h1v1h-1zM3 3h1v1h-1zM4 3h1v1h-1zM5 3h1v1h-1zM8 3h1v1h-1zM9 3h1v1h-1zM10 3h1v1h-1zM4 4h1v1h-1zM5 4h1v1h-1zM6 4h1v1h-1zM7 4h1v1h-1zM8 4h1v1h-1zM9 4h1v1h-1zM10 4h1v1h-1zM5 5h1v1h-1zM6 5h1v1h-1zM7 5h1v1h-1zM8 5h1v1h-1zM9 5h1v1h-1zM6 6h1v1h-1zM7 6h1v1h-1zM8 6h1v1h-1zM9 6h1v1h-1zM4 7h1v1h-1zM5 7h1v1h-1zM7 7h1v1h-1zM8 7h1v1h-1zM9 7h1v1h-1zM10 7h1v1h-1zM3 8h1v1h-1zM4 8h1v1h-1zM5 8h1v1h-1zM8 8h1v1h-1zM9 8h1v1h-1zM10 8h1v1h-1zM2 9h1v1h-1zM3 9h1v1h-1zM4 9h1v1h-1zM5 9h1v1h-1zM6 9h1v1h-1zM8 9h1v1h-1zM9 9h1v1h-1zM10 9h1v1h-1zM8 10h1v1h-1zM9 10h1v1h-1zM10 10h1v1h-1zM11 10h1v1h-1z" fill="#107010"/></svg>
<div class="a" style="left:97px;top:335px;width:298px;height:18px;background:#A8A8A8;border:1px solid #6E6E66"></div>
<div class="a t" style="left:99px;top:337px"><i class="m">002-</i>表<i class="m">C5-1&nbsp;</i>隐蔽工程验收记录</div>
<svg style="left:60px;top:354px" width="14" height="14" viewBox="0 0 14 14" shape-rendering="crispEdges"><rect x="0" y="0" width="14" height="14" fill="#F01010"/><rect x="2" y="2" width="10" height="10" fill="#fff"/><path d="M2 3h1v1h-1zM3 3h1v1h-1zM4 3h1v1h-1zM5 3h1v1h-1zM8 3h1v1h-1zM9 3h1v1h-1zM10 3h1v1h-1zM4 4h1v1h-1zM5 4h1v1h-1zM6 4h1v1h-1zM7 4h1v1h-1zM8 4h1v1h-1zM9 4h1v1h-1zM10 4h1v1h-1zM5 5h1v1h-1zM6 5h1v1h-1zM7 5h1v1h-1zM8 5h1v1h-1zM9 5h1v1h-1zM6 6h1v1h-1zM7 6h1v1h-1zM8 6h1v1h-1zM9 6h1v1h-1zM4 7h1v1h-1zM5 7h1v1h-1zM7 7h1v1h-1zM8 7h1v1h-1zM9 7h1v1h-1zM10 7h1v1h-1zM3 8h1v1h-1zM4 8h1v1h-1zM5 8h1v1h-1zM8 8h1v1h-1zM9 8h1v1h-1zM10 8h1v1h-1zM2 9h1v1h-1zM3 9h1v1h-1zM4 9h1v1h-1zM5 9h1v1h-1zM6 9h1v1h-1zM8 9h1v1h-1zM9 9h1v1h-1zM10 9h1v1h-1zM8 10h1v1h-1zM9 10h1v1h-1zM10 10h1v1h-1zM11 10h1v1h-1z" fill="#F01010"/></svg>
<div class="a t" style="left:80px;top:355px">表<i class="m">C5-2&nbsp;</i>交接检查记录</div>
<svg style="left:60px;top:372px" width="14" height="14" viewBox="0 0 14 14" shape-rendering="crispEdges"><rect x="0" y="0" width="14" height="14" fill="#F01010"/><rect x="2" y="2" width="10" height="10" fill="#fff"/><path d="M2 3h1v1h-1zM3 3h1v1h-1zM4 3h1v1h-1zM5 3h1v1h-1zM8 3h1v1h-1zM9 3h1v1h-1zM10 3h1v1h-1zM4 4h1v1h-1zM5 4h1v1h-1zM6 4h1v1h-1zM7 4h1v1h-1zM8 4h1v1h-1zM9 4h1v1h-1zM10 4h1v1h-1zM5 5h1v1h-1zM6 5h1v1h-1zM7 5h1v1h-1zM8 5h1v1h-1zM9 5h1v1h-1zM6 6h1v1h-1zM7 6h1v1h-1zM8 6h1v1h-1zM9 6h1v1h-1zM4 7h1v1h-1zM5 7h1v1h-1zM7 7h1v1h-1zM8 7h1v1h-1zM9 7h1v1h-1zM10 7h1v1h-1zM3 8h1v1h-1zM4 8h1v1h-1zM5 8h1v1h-1zM8 8h1v1h-1zM9 8h1v1h-1zM10 8h1v1h-1zM2 9h1v1h-1zM3 9h1v1h-1zM4 9h1v1h-1zM5 9h1v1h-1zM6 9h1v1h-1zM8 9h1v1h-1zM9 9h1v1h-1zM10 9h1v1h-1zM8 10h1v1h-1zM9 10h1v1h-1zM10 10h1v1h-1zM11 10h1v1h-1z" fill="#F01010"/></svg>
<div class="a t" style="left:80px;top:373px">表<i class="m">C5-3&nbsp;</i>地基验槽检查记录</div>
<svg style="left:60px;top:390px" width="14" height="14" viewBox="0 0 14 14" shape-rendering="crispEdges"><rect x="0" y="0" width="14" height="14" fill="#F01010"/><rect x="2" y="2" width="10" height="10" fill="#fff"/><path d="M2 3h1v1h-1zM3 3h1v1h-1zM4 3h1v1h-1zM5 3h1v1h-1zM8 3h1v1h-1zM9 3h1v1h-1zM10 3h1v1h-1zM4 4h1v1h-1zM5 4h1v1h-1zM6 4h1v1h-1zM7 4h1v1h-1zM8 4h1v1h-1zM9 4h1v1h-1zM10 4h1v1h-1zM5 5h1v1h-1zM6 5h1v1h-1zM7 5h1v1h-1zM8 5h1v1h-1zM9 5h1v1h-1zM6 6h1v1h-1zM7 6h1v1h-1zM8 6h1v1h-1zM9 6h1v1h-1zM4 7h1v1h-1zM5 7h1v1h-1zM7 7h1v1h-1zM8 7h1v1h-1zM9 7h1v1h-1zM10 7h1v1h-1zM3 8h1v1h-1zM4 8h1v1h-1zM5 8h1v1h-1zM8 8h1v1h-1zM9 8h1v1h-1zM10 8h1v1h-1zM2 9h1v1h-1zM3 9h1v1h-1zM4 9h1v1h-1zM5 9h1v1h-1zM6 9h1v1h-1zM8 9h1v1h-1zM9 9h1v1h-1zM10 9h1v1h-1zM8 10h1v1h-1zM9 10h1v1h-1zM10 10h1v1h-1zM11 10h1v1h-1z" fill="#F01010"/></svg>
<div class="a t" style="left:80px;top:391px">表<i class="m">C5-4&nbsp;</i>地基处理记录</div>
<svg style="left:60px;top:408px" width="14" height="14" viewBox="0 0 14 14" shape-rendering="crispEdges"><rect x="0" y="0" width="14" height="14" fill="#F01010"/><rect x="2" y="2" width="10" height="10" fill="#fff"/><path d="M2 3h1v1h-1zM3 3h1v1h-1zM4 3h1v1h-1zM5 3h1v1h-1zM8 3h1v1h-1zM9 3h1v1h-1zM10 3h1v1h-1zM4 4h1v1h-1zM5 4h1v1h-1zM6 4h1v1h-1zM7 4h1v1h-1zM8 4h1v1h-1zM9 4h1v1h-1zM10 4h1v1h-1zM5 5h1v1h-1zM6 5h1v1h-1zM7 5h1v1h-1zM8 5h1v1h-1zM9 5h1v1h-1zM6 6h1v1h-1zM7 6h1v1h-1zM8 6h1v1h-1zM9 6h1v1h-1zM4 7h1v1h-1zM5 7h1v1h-1zM7 7h1v1h-1zM8 7h1v1h-1zM9 7h1v1h-1zM10 7h1v1h-1zM3 8h1v1h-1zM4 8h1v1h-1zM5 8h1v1h-1zM8 8h1v1h-1zM9 8h1v1h-1zM10 8h1v1h-1zM2 9h1v1h-1zM3 9h1v1h-1zM4 9h1v1h-1zM5 9h1v1h-1zM6 9h1v1h-1zM8 9h1v1h-1zM9 9h1v1h-1zM10 9h1v1h-1zM8 10h1v1h-1zM9 10h1v1h-1zM10 10h1v1h-1zM11 10h1v1h-1z" fill="#F01010"/></svg>
<div class="a t" style="left:80px;top:409px">表<i class="m">C5-5&nbsp;</i>地基钎探记录（应附图）</div>
<svg style="left:60px;top:426px" width="14" height="14" viewBox="0 0 14 14" shape-rendering="crispEdges"><rect x="0" y="0" width="14" height="14" fill="#F01010"/><rect x="2" y="2" width="10" height="10" fill="#fff"/><path d="M2 3h1v1h-1zM3 3h1v1h-1zM4 3h1v1h-1zM5 3h1v1h-1zM8 3h1v1h-1zM9 3h1v1h-1zM10 3h1v1h-1zM4 4h1v1h-1zM5 4h1v1h-1zM6 4h1v1h-1zM7 4h1v1h-1zM8 4h1v1h-1zM9 4h1v1h-1zM10 4h1v1h-1zM5 5h1v1h-1zM6 5h1v1h-1zM7 5h1v1h-1zM8 5h1v1h-1zM9 5h1v1h-1zM6 6h1v1h-1zM7 6h1v1h-1zM8 6h1v1h-1zM9 6h1v1h-1zM4 7h1v1h-1zM5 7h1v1h-1zM7 7h1v1h-1zM8 7h1v1h-1zM9 7h1v1h-1zM10 7h1v1h-1zM3 8h1v1h-1zM4 8h1v1h-1zM5 8h1v1h-1zM8 8h1v1h-1zM9 8h1v1h-1zM10 8h1v1h-1zM2 9h1v1h-1zM3 9h1v1h-1zM4 9h1v1h-1zM5 9h1v1h-1zM6 9h1v1h-1zM8 9h1v1h-1zM9 9h1v1h-1zM10 9h1v1h-1zM8 10h1v1h-1zM9 10h1v1h-1zM10 10h1v1h-1zM11 10h1v1h-1z" fill="#F01010"/></svg>
<div class="a t" style="left:80px;top:427px">表<i class="m">C5-6&nbsp;</i>混凝土浇灌申请书</div>
<svg style="left:60px;top:444px" width="14" height="14" viewBox="0 0 14 14" shape-rendering="crispEdges"><rect x="0" y="0" width="14" height="14" fill="#F01010"/><rect x="2" y="2" width="10" height="10" fill="#fff"/><path d="M2 3h1v1h-1zM3 3h1v1h-1zM4 3h1v1h-1zM5 3h1v1h-1zM8 3h1v1h-1zM9 3h1v1h-1zM10 3h1v1h-1zM4 4h1v1h-1zM5 4h1v1h-1zM6 4h1v1h-1zM7 4h1v1h-1zM8 4h1v1h-1zM9 4h1v1h-1zM10 4h1v1h-1zM5 5h1v1h-1zM6 5h1v1h-1zM7 5h1v1h-1zM8 5h1v1h-1zM9 5h1v1h-1zM6 6h1v1h-1zM7 6h1v1h-1zM8 6h1v1h-1zM9 6h1v1h-1zM4 7h1v1h-1zM5 7h1v1h-1zM7 7h1v1h-1zM8 7h1v1h-1zM9 7h1v1h-1zM10 7h1v1h-1zM3 8h1v1h-1zM4 8h1v1h-1zM5 8h1v1h-1zM8 8h1v1h-1zM9 8h1v1h-1zM10 8h1v1h-1zM2 9h1v1h-1zM3 9h1v1h-1zM4 9h1v1h-1zM5 9h1v1h-1zM6 9h1v1h-1zM8 9h1v1h-1zM9 9h1v1h-1zM10 9h1v1h-1zM8 10h1v1h-1zM9 10h1v1h-1zM10 10h1v1h-1zM11 10h1v1h-1z" fill="#F01010"/></svg>
<div class="a t" style="left:80px;top:445px">表<i class="m">C5-7&nbsp;</i>混凝土拆模申请单</div>
<svg style="left:60px;top:462px" width="14" height="14" viewBox="0 0 14 14" shape-rendering="crispEdges"><rect x="0" y="0" width="14" height="14" fill="#F01010"/><rect x="2" y="2" width="10" height="10" fill="#fff"/><path d="M2 3h1v1h-1zM3 3h1v1h-1zM4 3h1v1h-1zM5 3h1v1h-1zM8 3h1v1h-1zM9 3h1v1h-1zM10 3h1v1h-1zM4 4h1v1h-1zM5 4h1v1h-1zM6 4h1v1h-1zM7 4h1v1h-1zM8 4h1v1h-1zM9 4h1v1h-1zM10 4h1v1h-1zM5 5h1v1h-1zM6 5h1v1h-1zM7 5h1v1h-1zM8 5h1v1h-1zM9 5h1v1h-1zM6 6h1v1h-1zM7 6h1v1h-1zM8 6h1v1h-1zM9 6h1v1h-1zM4 7h1v1h-1zM5 7h1v1h-1zM7 7h1v1h-1zM8 7h1v1h-1zM9 7h1v1h-1zM10 7h1v1h-1zM3 8h1v1h-1zM4 8h1v1h-1zM5 8h1v1h-1zM8 8h1v1h-1zM9 8h1v1h-1zM10 8h1v1h-1zM2 9h1v1h-1zM3 9h1v1h-1zM4 9h1v1h-1zM5 9h1v1h-1zM6 9h1v1h-1zM8 9h1v1h-1zM9 9h1v1h-1zM10 9h1v1h-1zM8 10h1v1h-1zM9 10h1v1h-1zM10 10h1v1h-1zM11 10h1v1h-1z" fill="#F01010"/></svg>
<div class="a t" style="left:80px;top:463px">表<i class="m">C5-8&nbsp;</i>混凝土养护测温记录（应附图）</div>
<div class="a" style="left:45px;top:483px;width:9px;height:9px;background:#fff;border:1px solid #A0A0A0"></div>
<div class="a" style="left:47px;top:487px;width:5px;height:1px;background:#000"></div>
<div class="a" style="left:49px;top:485px;width:1px;height:5px;background:#000"></div>
<svg style="left:60px;top:480px" width="14" height="14" viewBox="0 0 14 14" shape-rendering="crispEdges"><rect x="0" y="0" width="14" height="14" fill="#F01010"/><rect x="2" y="2" width="10" height="10" fill="#fff"/><path d="M2 3h1v1h-1zM3 3h1v1h-1zM4 3h1v1h-1zM5 3h1v1h-1zM8 3h1v1h-1zM9 3h1v1h-1zM10 3h1v1h-1zM4 4h1v1h-1zM5 4h1v1h-1zM6 4h1v1h-1zM7 4h1v1h-1zM8 4h1v1h-1zM9 4h1v1h-1zM10 4h1v1h-1zM5 5h1v1h-1zM6 5h1v1h-1zM7 5h1v1h-1zM8 5h1v1h-1zM9 5h1v1h-1zM6 6h1v1h-1zM7 6h1v1h-1zM8 6h1v1h-1zM9 6h1v1h-1zM4 7h1v1h-1zM5 7h1v1h-1zM7 7h1v1h-1zM8 7h1v1h-1zM9 7h1v1h-1zM10 7h1v1h-1zM3 8h1v1h-1zM4 8h1v1h-1zM5 8h1v1h-1zM8 8h1v1h-1zM9 8h1v1h-1zM10 8h1v1h-1zM2 9h1v1h-1zM3 9h1v1h-1zM4 9h1v1h-1zM5 9h1v1h-1zM6 9h1v1h-1zM8 9h1v1h-1zM9 9h1v1h-1zM10 9h1v1h-1zM8 10h1v1h-1zM9 10h1v1h-1zM10 10h1v1h-1zM11 10h1v1h-1z" fill="#F01010"/></svg>
<div class="a t" style="left:80px;top:481px">表<i class="m">C5-9&nbsp;</i>大体积混凝土测温记录（应附图）</div>
<svg style="left:60px;top:498px" width="14" height="14" viewBox="0 0 14 14" shape-rendering="crispEdges"><rect x="0" y="0" width="14" height="14" fill="#F01010"/><rect x="2" y="2" width="10" height="10" fill="#fff"/><path d="M2 3h1v1h-1zM3 3h1v1h-1zM4 3h1v1h-1zM5 3h1v1h-1zM8 3h1v1h-1zM9 3h1v1h-1zM10 3h1v1h-1zM4 4h1v1h-1zM5 4h1v1h-1zM6 4h1v1h-1zM7 4h1v1h-1zM8 4h1v1h-1zM9 4h1v1h-1zM10 4h1v1h-1zM5 5h1v1h-1zM6 5h1v1h-1zM7 5h1v1h-1zM8 5h1v1h-1zM9 5h1v1h-1zM6 6h1v1h-1zM7 6h1v1h-1zM8 6h1v1h-1zM9 6h1v1h-1zM4 7h1v1h-1zM5 7h1v1h-1zM7 7h1v1h-1zM8 7h1v1h-1zM9 7h1v1h-1zM10 7h1v1h-1zM3 8h1v1h-1zM4 8h1v1h-1zM5 8h1v1h-1zM8 8h1v1h-1zM9 8h1v1h-1zM10 8h1v1h-1zM2 9h1v1h-1zM3 9h1v1h-1zM4 9h1v1h-1zM5 9h1v1h-1zM6 9h1v1h-1zM8 9h1v1h-1zM9 9h1v1h-1zM10 9h1v1h-1zM8 10h1v1h-1zM9 10h1v1h-1zM10 10h1v1h-1zM11 10h1v1h-1z" fill="#F01010"/></svg>
<div class="a t" style="left:80px;top:499px">表<i class="m">C5-10&nbsp;</i>构件吊装记录</div>
<svg style="left:60px;top:516px" width="14" height="14" viewBox="0 0 14 14" shape-rendering="crispEdges"><rect x="0" y="0" width="14" height="14" fill="#F01010"/><rect x="2" y="2" width="10" height="10" fill="#fff"/><path d="M2 3h1v1h-1zM3 3h1v1h-1zM4 3h1v1h-1zM5 3h1v1h-1zM8 3h1v1h-1zM9 3h1v1h-1zM10 3h1v1h-1zM4 4h1v1h-1zM5 4h1v1h-1zM6 4h1v1h-1zM7 4h1v1h-1zM8 4h1v1h-1zM9 4h1v1h-1zM10 4h1v1h-1zM5 5h1v1h-1zM6 5h1v1h-1zM7 5h1v1h-1zM8 5h1v1h-1zM9 5h1v1h-1zM6 6h1v1h-1zM7 6h1v1h-1zM8 6h1v1h-1zM9 6h1v1h-1zM4 7h1v1h-1zM5 7h1v1h-1zM7 7h1v1h-1zM8 7h1v1h-1zM9 7h1v1h-1zM10 7h1v1h-1zM3 8h1v1h-1zM4 8h1v1h-1zM5 8h1v1h-1zM8 8h1v1h-1zM9 8h1v1h-1zM10 8h1v1h-1zM2 9h1v1h-1zM3 9h1v1h-1zM4 9h1v1h-1zM5 9h1v1h-1zM6 9h1v1h-1zM8 9h1v1h-1zM9 9h1v1h-1zM10 9h1v1h-1zM8 10h1v1h-1zM9 10h1v1h-1zM10 10h1v1h-1zM11 10h1v1h-1z" fill="#F01010"/></svg>
<div class="a t" style="left:80px;top:517px">表<i class="m">C5-11&nbsp;</i>焊接材料烘焙记录</div>
<svg style="left:60px;top:534px" width="14" height="14" viewBox="0 0 14 14" shape-rendering="crispEdges"><rect x="0" y="0" width="14" height="14" fill="#F01010"/><rect x="2" y="2" width="10" height="10" fill="#fff"/><path d="M2 3h1v1h-1zM3 3h1v1h-1zM4 3h1v1h-1zM5 3h1v1h-1zM8 3h1v1h-1zM9 3h1v1h-1zM10 3h1v1h-1zM4 4h1v1h-1zM5 4h1v1h-1zM6 4h1v1h-1zM7 4h1v1h-1zM8 4h1v1h-1zM9 4h1v1h-1zM10 4h1v1h-1zM5 5h1v1h-1zM6 5h1v1h-1zM7 5h1v1h-1zM8 5h1v1h-1zM9 5h1v1h-1zM6 6h1v1h-1zM7 6h1v1h-1zM8 6h1v1h-1zM9 6h1v1h-1zM4 7h1v1h-1zM5 7h1v1h-1zM7 7h1v1h-1zM8 7h1v1h-1zM9 7h1v1h-1zM10 7h1v1h-1zM3 8h1v1h-1zM4 8h1v1h-1zM5 8h1v1h-1zM8 8h1v1h-1zM9 8h1v1h-1zM10 8h1v1h-1zM2 9h1v1h-1zM3 9h1v1h-1zM4 9h1v1h-1zM5 9h1v1h-1zM6 9h1v1h-1zM8 9h1v1h-1zM9 9h1v1h-1zM10 9h1v1h-1zM8 10h1v1h-1zM9 10h1v1h-1zM10 10h1v1h-1zM11 10h1v1h-1z" fill="#F01010"/></svg>
<div class="a t" style="left:80px;top:535px">表<i class="m">C5-12&nbsp;</i>地下工程渗漏水检测记录</div>
<svg style="left:60px;top:552px" width="14" height="14" viewBox="0 0 14 14" shape-rendering="crispEdges"><rect x="0" y="0" width="14" height="14" fill="#F01010"/><rect x="2" y="2" width="10" height="10" fill="#fff"/><path d="M2 3h1v1h-1zM3 3h1v1h-1zM4 3h1v1h-1zM5 3h1v1h-1zM8 3h1v1h-1zM9 3h1v1h-1zM10 3h1v1h-1zM4 4h1v1h-1zM5 4h1v1h-1zM6 4h1v1h-1zM7 4h1v1h-1zM8 4h1v1h-1zM9 4h1v1h-1zM10 4h1v1h-1zM5 5h1v1h-1zM6 5h1v1h-1zM7 5h1v1h-1zM8 5h1v1h-1zM9 5h1v1h-1zM6 6h1v1h-1zM7 6h1v1h-1zM8 6h1v1h-1zM9 6h1v1h-1zM4 7h1v1h-1zM5 7h1v1h-1zM7 7h1v1h-1zM8 7h1v1h-1zM9 7h1v1h-1zM10 7h1v1h-1zM3 8h1v1h-1zM4 8h1v1h-1zM5 8h1v1h-1zM8 8h1v1h-1zM9 8h1v1h-1zM10 8h1v1h-1zM2 9h1v1h-1zM3 9h1v1h-1zM4 9h1v1h-1zM5 9h1v1h-1zM6 9h1v1h-1zM8 9h1v1h-1zM9 9h1v1h-1zM10 9h1v1h-1zM8 10h1v1h-1zM9 10h1v1h-1zM10 10h1v1h-1zM11 10h1v1h-1z" fill="#F01010"/></svg>
<div class="a t" style="left:80px;top:553px">表<i class="m">C5-13&nbsp;</i>防水工程试水检查记录</div>
<svg style="left:60px;top:570px" width="14" height="14" viewBox="0 0 14 14" shape-rendering="crispEdges"><rect x="0" y="0" width="14" height="14" fill="#F01010"/><rect x="2" y="2" width="10" height="10" fill="#fff"/><path d="M2 3h1v1h-1zM3 3h1v1h-1zM4 3h1v1h-1zM5 3h1v1h-1zM8 3h1v1h-1zM9 3h1v1h-1zM10 3h1v1h-1zM4 4h1v1h-1zM5 4h1v1h-1zM6 4h1v1h-1zM7 4h1v1h-1zM8 4h1v1h-1zM9 4h1v1h-1zM10 4h1v1h-1zM5 5h1v1h-1zM6 5h1v1h-1zM7 5h1v1h-1zM8 5h1v1h-1zM9 5h1v1h-1zM6 6h1v1h-1zM7 6h1v1h-1zM8 6h1v1h-1zM9 6h1v1h-1zM4 7h1v1h-1zM5 7h1v1h-1zM7 7h1v1h-1zM8 7h1v1h-1zM9 7h1v1h-1zM10 7h1v1h-1zM3 8h1v1h-1zM4 8h1v1h-1zM5 8h1v1h-1zM8 8h1v1h-1zM9 8h1v1h-1zM10 8h1v1h-1zM2 9h1v1h-1zM3 9h1v1h-1zM4 9h1v1h-1zM5 9h1v1h-1zM6 9h1v1h-1zM8 9h1v1h-1zM9 9h1v1h-1zM10 9h1v1h-1zM8 10h1v1h-1zM9 10h1v1h-1zM10 10h1v1h-1zM11 10h1v1h-1z" fill="#F01010"/></svg>
<div class="a t" style="left:80px;top:571px">表<i class="m">C5-14&nbsp;</i>通风<i class="m">(</i>烟<i class="m">)</i>道检查记录</div>
<svg style="left:60px;top:588px" width="14" height="14" viewBox="0 0 14 14" shape-rendering="crispEdges"><rect x="0" y="0" width="14" height="14" fill="#F01010"/><rect x="2" y="2" width="10" height="10" fill="#fff"/><path d="M2 3h1v1h-1zM3 3h1v1h-1zM4 3h1v1h-1zM5 3h1v1h-1zM8 3h1v1h-1zM9 3h1v1h-1zM10 3h1v1h-1zM4 4h1v1h-1zM5 4h1v1h-1zM6 4h1v1h-1zM7 4h1v1h-1zM8 4h1v1h-1zM9 4h1v1h-1zM10 4h1v1h-1zM5 5h1v1h-1zM6 5h1v1h-1zM7 5h1v1h-1zM8 5h1v1h-1zM9 5h1v1h-1zM6 6h1v1h-1zM7 6h1v1h-1zM8 6h1v1h-1zM9 6h1v1h-1zM4 7h1v1h-1zM5 7h1v1h-1zM7 7h1v1h-1zM8 7h1v1h-1zM9 7h1v1h-1zM10 7h1v1h-1zM3 8h1v1h-1zM4 8h1v1h-1zM5 8h1v1h-1zM8 8h1v1h-1zM9 8h1v1h-1zM10 8h1v1h-1zM2 9h1v1h-1zM3 9h1v1h-1zM4 9h1v1h-1zM5 9h1v1h-1zM6 9h1v1h-1zM8 9h1v1h-1zM9 9h1v1h-1zM10 9h1v1h-1zM8 10h1v1h-1zM9 10h1v1h-1zM10 10h1v1h-1zM11 10h1v1h-1z" fill="#F01010"/></svg>
<div class="a t" style="left:80px;top:589px">表<i class="m">C5-15&nbsp;</i>预应力筋张拉记录<i class="m">(</i>一<i class="m">)</i>、（二）</div>
<svg style="left:60px;top:606px" width="14" height="14" viewBox="0 0 14 14" shape-rendering="crispEdges"><rect x="0" y="0" width="14" height="14" fill="#F01010"/><rect x="2" y="2" width="10" height="10" fill="#fff"/><path d="M2 3h1v1h-1zM3 3h1v1h-1zM4 3h1v1h-1zM5 3h1v1h-1zM8 3h1v1h-1zM9 3h1v1h-1zM10 3h1v1h-1zM4 4h1v1h-1zM5 4h1v1h-1zM6 4h1v1h-1zM7 4h1v1h-1zM8 4h1v1h-1zM9 4h1v1h-1zM10 4h1v1h-1zM5 5h1v1h-1zM6 5h1v1h-1zM7 5h1v1h-1zM8 5h1v1h-1zM9 5h1v1h-1zM6 6h1v1h-1zM7 6h1v1h-1zM8 6h1v1h-1zM9 6h1v1h-1zM4 7h1v1h-1zM5 7h1v1h-1zM7 7h1v1h-1zM8 7h1v1h-1zM9 7h1v1h-1zM10 7h1v1h-1zM3 8h1v1h-1zM4 8h1v1h-1zM5 8h1v1h-1zM8 8h1v1h-1zM9 8h1v1h-1zM10 8h1v1h-1zM2 9h1v1h-1zM3 9h1v1h-1zM4 9h1v1h-1zM5 9h1v1h-1zM6 9h1v1h-1zM8 9h1v1h-1zM9 9h1v1h-1zM10 9h1v1h-1zM8 10h1v1h-1zM9 10h1v1h-1zM10 10h1v1h-1zM11 10h1v1h-1z" fill="#F01010"/></svg>
<div class="a t" style="left:80px;top:607px">表<i class="m">C5-16&nbsp;</i>有粘结预应力结构灌浆记录</div>
<svg style="left:60px;top:624px" width="14" height="14" viewBox="0 0 14 14" shape-rendering="crispEdges"><rect x="0" y="0" width="14" height="14" fill="#F01010"/><rect x="2" y="2" width="10" height="10" fill="#fff"/><path d="M2 3h1v1h-1zM3 3h1v1h-1zM4 3h1v1h-1zM5 3h1v1h-1zM8 3h1v1h-1zM9 3h1v1h-1zM10 3h1v1h-1zM4 4h1v1h-1zM5 4h1v1h-1zM6 4h1v1h-1zM7 4h1v1h-1zM8 4h1v1h-1zM9 4h1v1h-1zM10 4h1v1h-1zM5 5h1v1h-1zM6 5h1v1h-1zM7 5h1v1h-1zM8 5h1v1h-1zM9 5h1v1h-1zM6 6h1v1h-1zM7 6h1v1h-1zM8 6h1v1h-1zM9 6h1v1h-1zM4 7h1v1h-1zM5 7h1v1h-1zM7 7h1v1h-1zM8 7h1v1h-1zM9 7h1v1h-1zM10 7h1v1h-1zM3 8h1v1h-1zM4 8h1v1h-1zM5 8h1v1h-1zM8 8h1v1h-1zM9 8h1v1h-1zM10 8h1v1h-1zM2 9h1v1h-1zM3 9h1v1h-1zM4 9h1v1h-1zM5 9h1v1h-1zM6 9h1v1h-1zM8 9h1v1h-1zM9 9h1v1h-1zM10 9h1v1h-1zM8 10h1v1h-1zM9 10h1v1h-1zM10 10h1v1h-1zM11 10h1v1h-1z" fill="#F01010"/></svg>
<div class="a t" style="left:80px;top:625px">表<i class="m">C5-17&nbsp;</i>钢筋螺纹加工现场检查记录</div>
<svg style="left:60px;top:642px" width="14" height="14" viewBox="0 0 14 14" shape-rendering="crispEdges"><rect x="0" y="0" width="14" height="14" fill="#F01010"/><rect x="2" y="2" width="10" height="10" fill="#fff"/><path d="M2 3h1v1h-1zM3 3h1v1h-1zM4 3h1v1h-1zM5 3h1v1h-1zM8 3h1v1h-1zM9 3h1v1h-1zM10 3h1v1h-1zM4 4h1v1h-1zM5 4h1v1h-1zM6 4h1v1h-1zM7 4h1v1h-1zM8 4h1v1h-1zM9 4h1v1h-1zM10 4h1v1h-1zM5 5h1v1h-1zM6 5h1v1h-1zM7 5h1v1h-1zM8 5h1v1h-1zM9 5h1v1h-1zM6 6h1v1h-1zM7 6h1v1h-1zM8 6h1v1h-1zM9 6h1v1h-1zM4 7h1v1h-1zM5 7h1v1h-1zM7 7h1v1h-1zM8 7h1v1h-1zM9 7h1v1h-1zM10 7h1v1h-1zM3 8h1v1h-1zM4 8h1v1h-1zM5 8h1v1h-1zM8 8h1v1h-1zM9 8h1v1h-1zM10 8h1v1h-1zM2 9h1v1h-1zM3 9h1v1h-1zM4 9h1v1h-1zM5 9h1v1h-1zM6 9h1v1h-1zM8 9h1v1h-1zM9 9h1v1h-1zM10 9h1v1h-1zM8 10h1v1h-1zM9 10h1v1h-1zM10 10h1v1h-1zM11 10h1v1h-1z" fill="#F01010"/></svg>
<div class="a t" style="left:80px;top:643px">表<i class="m">C5-18&nbsp;</i>混凝土养护记录</div>
<svg style="left:60px;top:660px" width="14" height="14" viewBox="0 0 14 14" shape-rendering="crispEdges"><rect x="0" y="0" width="14" height="14" fill="#F01010"/><rect x="2" y="2" width="10" height="10" fill="#fff"/><path d="M2 3h1v1h-1zM3 3h1v1h-1zM4 3h1v1h-1zM5 3h1v1h-1zM8 3h1v1h-1zM9 3h1v1h-1zM10 3h1v1h-1zM4 4h1v1h-1zM5 4h1v1h-1zM6 4h1v1h-1zM7 4h1v1h-1zM8 4h1v1h-1zM9 4h1v1h-1zM10 4h1v1h-1zM5 5h1v1h-1zM6 5h1v1h-1zM7 5h1v1h-1zM8 5h1v1h-1zM9 5h1v1h-1zM6 6h1v1h-1zM7 6h1v1h-1zM8 6h1v1h-1zM9 6h1v1h-1zM4 7h1v1h-1zM5 7h1v1h-1zM7 7h1v1h-1zM8 7h1v1h-1zM9 7h1v1h-1zM10 7h1v1h-1zM3 8h1v1h-1zM4 8h1v1h-1zM5 8h1v1h-1zM8 8h1v1h-1zM9 8h1v1h-1zM10 8h1v1h-1zM2 9h1v1h-1zM3 9h1v1h-1zM4 9h1v1h-1zM5 9h1v1h-1zM6 9h1v1h-1zM8 9h1v1h-1zM9 9h1v1h-1zM10 9h1v1h-1zM8 10h1v1h-1zM9 10h1v1h-1zM10 10h1v1h-1zM11 10h1v1h-1z" fill="#F01010"/></svg>
<div class="a t" style="left:80px;top:661px">表<i class="m">C5-19-1&nbsp;600</i>℃・<i class="m">d</i>实体检验温度记录</div>
<svg style="left:60px;top:678px" width="14" height="14" viewBox="0 0 14 14" shape-rendering="crispEdges"><rect x="0" y="0" width="14" height="14" fill="#F01010"/><rect x="2" y="2" width="10" height="10" fill="#fff"/><path d="M2 3h1v1h-1zM3 3h1v1h-1zM4 3h1v1h-1zM5 3h1v1h-1zM8 3h1v1h-1zM9 3h1v1h-1zM10 3h1v1h-1zM4 4h1v1h-1zM5 4h1v1h-1zM6 4h1v1h-1zM7 4h1v1h-1zM8 4h1v1h-1zM9 4h1v1h-1zM10 4h1v1h-1zM5 5h1v1h-1zM6 5h1v1h-1zM7 5h1v1h-1zM8 5h1v1h-1zM9 5h1v1h-1zM6 6h1v1h-1zM7 6h1v1h-1zM8 6h1v1h-1zM9 6h1v1h-1zM4 7h1v1h-1zM5 7h1v1h-1zM7 7h1v1h-1zM8 7h1v1h-1zM9 7h1v1h-1zM10 7h1v1h-1zM3 8h1v1h-1zM4 8h1v1h-1zM5 8h1v1h-1zM8 8h1v1h-1zM9 8h1v1h-1zM10 8h1v1h-1zM2 9h1v1h-1zM3 9h1v1h-1zM4 9h1v1h-1zM5 9h1v1h-1zM6 9h1v1h-1zM8 9h1v1h-1zM9 9h1v1h-1zM10 9h1v1h-1zM8 10h1v1h-1zM9 10h1v1h-1zM10 10h1v1h-1zM11 10h1v1h-1z" fill="#F01010"/></svg>
<div class="a t" style="left:80px;top:679px">表<i class="m">C5-19-2&nbsp;600</i>℃・<i class="m">d</i>实体检验等效龄期计算表</div>
<svg style="left:60px;top:696px" width="14" height="14" viewBox="0 0 14 14" shape-rendering="crispEdges"><rect x="0" y="0" width="14" height="14" fill="#F01010"/><rect x="2" y="2" width="10" height="10" fill="#fff"/><path d="M2 3h1v1h-1zM3 3h1v1h-1zM4 3h1v1h-1zM5 3h1v1h-1zM8 3h1v1h-1zM9 3h1v1h-1zM10 3h1v1h-1zM4 4h1v1h-1zM5 4h1v1h-1zM6 4h1v1h-1zM7 4h1v1h-1zM8 4h1v1h-1zM9 4h1v1h-1zM10 4h1v1h-1zM5 5h1v1h-1zM6 5h1v1h-1zM7 5h1v1h-1zM8 5h1v1h-1zM9 5h1v1h-1zM6 6h1v1h-1zM7 6h1v1h-1zM8 6h1v1h-1zM9 6h1v1h-1zM4 7h1v1h-1zM5 7h1v1h-1zM7 7h1v1h-1zM8 7h1v1h-1zM9 7h1v1h-1zM10 7h1v1h-1zM3 8h1v1h-1zM4 8h1v1h-1zM5 8h1v1h-1zM8 8h1v1h-1zM9 8h1v1h-1zM10 8h1v1h-1zM2 9h1v1h-1zM3 9h1v1h-1zM4 9h1v1h-1zM5 9h1v1h-1zM6 9h1v1h-1zM8 9h1v1h-1zM9 9h1v1h-1zM10 9h1v1h-1zM8 10h1v1h-1zM9 10h1v1h-1zM10 10h1v1h-1zM11 10h1v1h-1z" fill="#F01010"/></svg>
<div class="a t" style="left:80px;top:697px">表<i class="m">C5-20&nbsp;</i>外窗淋水试验检查记录</div>
<svg style="left:60px;top:714px" width="14" height="14" viewBox="0 0 14 14" shape-rendering="crispEdges"><rect x="0" y="0" width="14" height="14" fill="#F01010"/><rect x="2" y="2" width="10" height="10" fill="#fff"/><path d="M2 3h1v1h-1zM3 3h1v1h-1zM4 3h1v1h-1zM5 3h1v1h-1zM8 3h1v1h-1zM9 3h1v1h-1zM10 3h1v1h-1zM4 4h1v1h-1zM5 4h1v1h-1zM6 4h1v1h-1zM7 4h1v1h-1zM8 4h1v1h-1zM9 4h1v1h-1zM10 4h1v1h-1zM5 5h1v1h-1zM6 5h1v1h-1zM7 5h1v1h-1zM8 5h1v1h-1zM9 5h1v1h-1zM6 6h1v1h-1zM7 6h1v1h-1zM8 6h1v1h-1zM9 6h1v1h-1zM4 7h1v1h-1zM5 7h1v1h-1zM7 7h1v1h-1zM8 7h1v1h-1zM9 7h1v1h-1zM10 7h1v1h-1zM3 8h1v1h-1zM4 8h1v1h-1zM5 8h1v1h-1zM8 8h1v1h-1zM9 8h1v1h-1zM10 8h1v1h-1zM2 9h1v1h-1zM3 9h1v1h-1zM4 9h1v1h-1zM5 9h1v1h-1zM6 9h1v1h-1zM8 9h1v1h-1zM9 9h1v1h-1zM10 9h1v1h-1zM8 10h1v1h-1zM9 10h1v1h-1zM10 10h1v1h-1zM11 10h1v1h-1z" fill="#F01010"/></svg>
<div class="a t" style="left:80px;top:715px">表<i class="m">C5-21&nbsp;</i>施工记录（通用）</div>
<svg style="left:59px;top:733px" width="16" height="13" viewBox="0 0 16 13"><path d="M1 2.5Q1 1 2.5 1H6L7.5 2.5H13.5Q15 2.5 15 4V11Q15 12 14 12H2Q1 12 1 11Z" fill="#F6D776" stroke="#B58A2A" stroke-width="1"/><path d="M1.5 5H14.5" stroke="#FBEBB0" stroke-width="1"/><path d="M2 12.5H15" stroke="#8A6A20" stroke-width="1"/></svg>
<div class="a t" style="left:80px;top:733px">幕墙注胶检查记录</div>
<svg style="left:59px;top:751px" width="16" height="13" viewBox="0 0 16 13"><path d="M1 2.5Q1 1 2.5 1H6L7.5 2.5H13.5Q15 2.5 15 4V11Q15 12 14 12H2Q1 12 1 11Z" fill="#F6D776" stroke="#B58A2A" stroke-width="1"/><path d="M1.5 5H14.5" stroke="#FBEBB0" stroke-width="1"/><path d="M2 12.5H15" stroke="#8A6A20" stroke-width="1"/></svg>
<div class="a t" style="left:80px;top:751px">基坑支护变形监测记录</div>
<svg style="left:59px;top:769px" width="16" height="13" viewBox="0 0 16 13"><path d="M1 2.5Q1 1 2.5 1H6L7.5 2.5H13.5Q15 2.5 15 4V11Q15 12 14 12H2Q1 12 1 11Z" fill="#F6D776" stroke="#B58A2A" stroke-width="1"/><path d="M1.5 5H14.5" stroke="#FBEBB0" stroke-width="1"/><path d="M2 12.5H15" stroke="#8A6A20" stroke-width="1"/></svg>
<div class="a t" style="left:80px;top:769px">桩（地）基施工记录</div>
<svg style="left:59px;top:787px" width="16" height="13" viewBox="0 0 16 13"><path d="M1 2.5Q1 1 2.5 1H6L7.5 2.5H13.5Q15 2.5 15 4V11Q15 12 14 12H2Q1 12 1 11Z" fill="#F6D776" stroke="#B58A2A" stroke-width="1"/><path d="M1.5 5H14.5" stroke="#FBEBB0" stroke-width="1"/><path d="M2 12.5H15" stroke="#8A6A20" stroke-width="1"/></svg>
<div class="a t" style="left:80px;top:787px">网架（索膜）施工记录</div>
<svg style="left:59px;top:805px" width="16" height="13" viewBox="0 0 16 13"><path d="M1 2.5Q1 1 2.5 1H6L7.5 2.5H13.5Q15 2.5 15 4V11Q15 12 14 12H2Q1 12 1 11Z" fill="#F6D776" stroke="#B58A2A" stroke-width="1"/><path d="M1.5 5H14.5" stroke="#FBEBB0" stroke-width="1"/><path d="M2 12.5H15" stroke="#8A6A20" stroke-width="1"/></svg>
<div class="a t" style="left:80px;top:805px">钢结构施工记录</div>
<svg style="left:59px;top:823px" width="16" height="13" viewBox="0 0 16 13"><path d="M1 2.5Q1 1 2.5 1H6L7.5 2.5H13.5Q15 2.5 15 4V11Q15 12 14 12H2Q1 12 1 11Z" fill="#F6D776" stroke="#B58A2A" stroke-width="1"/><path d="M1.5 5H14.5" stroke="#FBEBB0" stroke-width="1"/><path d="M2 12.5H15" stroke="#8A6A20" stroke-width="1"/></svg>
<div class="a t" style="left:80px;top:823px">规范标准要求有记录的均应按规定记录</div>
<div class="a" style="left:26px;top:843px;width:9px;height:9px;background:#fff;border:1px solid #A0A0A0"></div>
<div class="a" style="left:28px;top:847px;width:5px;height:1px;background:#000"></div>
<div class="a" style="left:30px;top:845px;width:1px;height:5px;background:#000"></div>
<svg style="left:40px;top:841px" width="16" height="13" viewBox="0 0 16 13"><path d="M1 2.5Q1 1 2.5 1H6L7.5 2.5H13.5Q15 2.5 15 4V11Q15 12 14 12H2Q1 12 1 11Z" fill="#F6D776" stroke="#B58A2A" stroke-width="1"/><path d="M1.5 5H14.5" stroke="#FBEBB0" stroke-width="1"/><path d="M2 12.5H15" stroke="#8A6A20" stroke-width="1"/></svg>
<div class="a t" style="left:61px;top:841px"><i class="m">C6&nbsp;</i>施工试验资料</div>
</div></div>
<div class="a" style="left:396px;top:118px;width:16px;height:728px;background:repeating-conic-gradient(#F4F4F4 0 25%,#E8E8E8 0 50%) 0 0/2px 2px"></div>
<div class="a" style="left:396px;top:118px;width:16px;height:17px;background:#F0F0F0"></div>
<svg style="left:400px;top:124px" width="9" height="5"><path d="M0 5H9L4.5 0Z" fill="#000"/></svg>
<div class="a" style="left:396px;top:135px;width:16px;height:463px;background:#F0F0F0;border-top:1px solid #9A9A9A;border-bottom:1px solid #9A9A9A"></div>
<div class="a" style="left:395px;top:828px;width:17px;height:17px;background:#F0F0F0;border:1px solid #fff;border-right-color:#A0A0A0;border-bottom-color:#A0A0A0"></div>
<svg style="left:400px;top:833px" width="9" height="5"><path d="M0 0H9L4.5 5Z" fill="#000"/></svg>
<div class="a" style="left:412px;top:117px;width:2px;height:729px;background:#9A9A9A;border-right:1px solid #fff"></div>
<div class="a" style="left:1px;top:846px;width:413px;height:8px;background:#fff;border-left:1px solid #9A9A9A"></div>
<div class="a" style="left:127px;top:846px;width:161px;height:8px;background:linear-gradient(#F8FBFF,#C9D9EE);border:1px solid #8EA4C4;border-radius:4px"></div>
<svg style="left:205px;top:847px" width="8" height="5"><path d="M0.5 0.5L4 4L7.5 0.5" stroke="#000" stroke-width="1.3" fill="none"/></svg>
<div class="a" style="left:1px;top:854px;width:413px;height:127px;background:#fff;border:1px solid #9A9A9A"></div>
<div class="a" style="left:2px;top:855px;width:394px;height:16px;background:linear-gradient(#FFFFFF,#EDEDED)"></div>
<div class="a t" style="left:161px;top:857px;">范</div>
<div class="a t" style="left:221px;top:857px;">例</div>
<svg style="left:3px;top:872px" width="14" height="14" viewBox="0 0 14 14" shape-rendering="crispEdges"><rect x="0" y="0" width="14" height="14" fill="#107010"/><rect x="2" y="2" width="10" height="10" fill="#fff"/><path d="M2 3h1v1h-1zM3 3h1v1h-1zM4 3h1v1h-1zM5 3h1v1h-1zM8 3h1v1h-1zM9 3h1v1h-1zM10 3h1v1h-1zM4 4h1v1h-1zM5 4h1v1h-1zM6 4h1v1h-1zM7 4h1v1h-1zM8 4h1v1h-1zM9 4h1v1h-1zM10 4h1v1h-1zM5 5h1v1h-1zM6 5h1v1h-1zM7 5h1v1h-1zM8 5h1v1h-1zM9 5h1v1h-1zM6 6h1v1h-1zM7 6h1v1h-1zM8 6h1v1h-1zM9 6h1v1h-1zM4 7h1v1h-1zM5 7h1v1h-1zM7 7h1v1h-1zM8 7h1v1h-1zM9 7h1v1h-1zM10 7h1v1h-1zM3 8h1v1h-1zM4 8h1v1h-1zM5 8h1v1h-1zM8 8h1v1h-1zM9 8h1v1h-1zM10 8h1v1h-1zM2 9h1v1h-1zM3 9h1v1h-1zM4 9h1v1h-1zM5 9h1v1h-1zM6 9h1v1h-1zM8 9h1v1h-1zM9 9h1v1h-1zM10 9h1v1h-1zM8 10h1v1h-1zM9 10h1v1h-1zM10 10h1v1h-1zM11 10h1v1h-1z" fill="#107010"/></svg>
<div class="a t" style="left:22px;top:873px;">钢筋安装</div>
<svg style="left:3px;top:890px" width="14" height="14" viewBox="0 0 14 14" shape-rendering="crispEdges"><rect x="0" y="0" width="14" height="14" fill="#107010"/><rect x="2" y="2" width="10" height="10" fill="#fff"/><path d="M2 3h1v1h-1zM3 3h1v1h-1zM4 3h1v1h-1zM5 3h1v1h-1zM8 3h1v1h-1zM9 3h1v1h-1zM10 3h1v1h-1zM4 4h1v1h-1zM5 4h1v1h-1zM6 4h1v1h-1zM7 4h1v1h-1zM8 4h1v1h-1zM9 4h1v1h-1zM10 4h1v1h-1zM5 5h1v1h-1zM6 5h1v1h-1zM7 5h1v1h-1zM8 5h1v1h-1zM9 5h1v1h-1zM6 6h1v1h-1zM7 6h1v1h-1zM8 6h1v1h-1zM9 6h1v1h-1zM4 7h1v1h-1zM5 7h1v1h-1zM7 7h1v1h-1zM8 7h1v1h-1zM9 7h1v1h-1zM10 7h1v1h-1zM3 8h1v1h-1zM4 8h1v1h-1zM5 8h1v1h-1zM8 8h1v1h-1zM9 8h1v1h-1zM10 8h1v1h-1zM2 9h1v1h-1zM3 9h1v1h-1zM4 9h1v1h-1zM5 9h1v1h-1zM6 9h1v1h-1zM8 9h1v1h-1zM9 9h1v1h-1zM10 9h1v1h-1zM8 10h1v1h-1zM9 10h1v1h-1zM10 10h1v1h-1zM11 10h1v1h-1z" fill="#107010"/></svg>
<div class="a t" style="left:22px;top:891px;">给水安装</div>
<svg style="left:3px;top:908px" width="14" height="14" viewBox="0 0 14 14" shape-rendering="crispEdges"><rect x="0" y="0" width="14" height="14" fill="#107010"/><rect x="2" y="2" width="10" height="10" fill="#fff"/><path d="M2 3h1v1h-1zM3 3h1v1h-1zM4 3h1v1h-1zM5 3h1v1h-1zM8 3h1v1h-1zM9 3h1v1h-1zM10 3h1v1h-1zM4 4h1v1h-1zM5 4h1v1h-1zM6 4h1v1h-1zM7 4h1v1h-1zM8 4h1v1h-1zM9 4h1v1h-1zM10 4h1v1h-1zM5 5h1v1h-1zM6 5h1v1h-1zM7 5h1v1h-1zM8 5h1v1h-1zM9 5h1v1h-1zM6 6h1v1h-1zM7 6h1v1h-1zM8 6h1v1h-1zM9 6h1v1h-1zM4 7h1v1h-1zM5 7h1v1h-1zM7 7h1v1h-1zM8 7h1v1h-1zM9 7h1v1h-1zM10 7h1v1h-1zM3 8h1v1h-1zM4 8h1v1h-1zM5 8h1v1h-1zM8 8h1v1h-1zM9 8h1v1h-1zM10 8h1v1h-1zM2 9h1v1h-1zM3 9h1v1h-1zM4 9h1v1h-1zM5 9h1v1h-1zM6 9h1v1h-1zM8 9h1v1h-1zM9 9h1v1h-1zM10 9h1v1h-1zM8 10h1v1h-1zM9 10h1v1h-1zM10 10h1v1h-1zM11 10h1v1h-1z" fill="#107010"/></svg>
<div class="a t" style="left:22px;top:909px;">止水钢板</div>
<svg style="left:3px;top:926px" width="14" height="14" viewBox="0 0 14 14" shape-rendering="crispEdges"><rect x="0" y="0" width="14" height="14" fill="#107010"/><rect x="2" y="2" width="10" height="10" fill="#fff"/><path d="M2 3h1v1h-1zM3 3h1v1h-1zM4 3h1v1h-1zM5 3h1v1h-1zM8 3h1v1h-1zM9 3h1v1h-1zM10 3h1v1h-1zM4 4h1v1h-1zM5 4h1v1h-1zM6 4h1v1h-1zM7 4h1v1h-1zM8 4h1v1h-1zM9 4h1v1h-1zM10 4h1v1h-1zM5 5h1v1h-1zM6 5h1v1h-1zM7 5h1v1h-1zM8 5h1v1h-1zM9 5h1v1h-1zM6 6h1v1h-1zM7 6h1v1h-1zM8 6h1v1h-1zM9 6h1v1h-1zM4 7h1v1h-1zM5 7h1v1h-1zM7 7h1v1h-1zM8 7h1v1h-1zM9 7h1v1h-1zM10 7h1v1h-1zM3 8h1v1h-1zM4 8h1v1h-1zM5 8h1v1h-1zM8 8h1v1h-1zM9 8h1v1h-1zM10 8h1v1h-1zM2 9h1v1h-1zM3 9h1v1h-1zM4 9h1v1h-1zM5 9h1v1h-1zM6 9h1v1h-1zM8 9h1v1h-1zM9 9h1v1h-1zM10 9h1v1h-1zM8 10h1v1h-1zM9 10h1v1h-1zM10 10h1v1h-1zM11 10h1v1h-1z" fill="#107010"/></svg>
<div class="a t" style="left:22px;top:927px;">施工缝处理</div>
<svg style="left:3px;top:944px" width="14" height="14" viewBox="0 0 14 14" shape-rendering="crispEdges"><rect x="0" y="0" width="14" height="14" fill="#107010"/><rect x="2" y="2" width="10" height="10" fill="#fff"/><path d="M2 3h1v1h-1zM3 3h1v1h-1zM4 3h1v1h-1zM5 3h1v1h-1zM8 3h1v1h-1zM9 3h1v1h-1zM10 3h1v1h-1zM4 4h1v1h-1zM5 4h1v1h-1zM6 4h1v1h-1zM7 4h1v1h-1zM8 4h1v1h-1zM9 4h1v1h-1zM10 4h1v1h-1zM5 5h1v1h-1zM6 5h1v1h-1zM7 5h1v1h-1zM8 5h1v1h-1zM9 5h1v1h-1zM6 6h1v1h-1zM7 6h1v1h-1zM8 6h1v1h-1zM9 6h1v1h-1zM4 7h1v1h-1zM5 7h1v1h-1zM7 7h1v1h-1zM8 7h1v1h-1zM9 7h1v1h-1zM10 7h1v1h-1zM3 8h1v1h-1zM4 8h1v1h-1zM5 8h1v1h-1zM8 8h1v1h-1zM9 8h1v1h-1zM10 8h1v1h-1zM2 9h1v1h-1zM3 9h1v1h-1zM4 9h1v1h-1zM5 9h1v1h-1zM6 9h1v1h-1zM8 9h1v1h-1zM9 9h1v1h-1zM10 9h1v1h-1zM8 10h1v1h-1zM9 10h1v1h-1zM10 10h1v1h-1zM11 10h1v1h-1z" fill="#107010"/></svg>
<div class="a t" style="left:22px;top:945px;">电气照明导管安装</div>
<svg style="left:3px;top:962px" width="14" height="14" viewBox="0 0 14 14" shape-rendering="crispEdges"><rect x="0" y="0" width="14" height="14" fill="#107010"/><rect x="2" y="2" width="10" height="10" fill="#fff"/><path d="M2 3h1v1h-1zM3 3h1v1h-1zM4 3h1v1h-1zM5 3h1v1h-1zM8 3h1v1h-1zM9 3h1v1h-1zM10 3h1v1h-1zM4 4h1v1h-1zM5 4h1v1h-1zM6 4h1v1h-1zM7 4h1v1h-1zM8 4h1v1h-1zM9 4h1v1h-1zM10 4h1v1h-1zM5 5h1v1h-1zM6 5h1v1h-1zM7 5h1v1h-1zM8 5h1v1h-1zM9 5h1v1h-1zM6 6h1v1h-1zM7 6h1v1h-1zM8 6h1v1h-1zM9 6h1v1h-1zM4 7h1v1h-1zM5 7h1v1h-1zM7 7h1v1h-1zM8 7h1v1h-1zM9 7h1v1h-1zM10 7h1v1h-1zM3 8h1v1h-1zM4 8h1v1h-1zM5 8h1v1h-1zM8 8h1v1h-1zM9 8h1v1h-1zM10 8h1v1h-1zM2 9h1v1h-1zM3 9h1v1h-1zM4 9h1v1h-1zM5 9h1v1h-1zM6 9h1v1h-1zM8 9h1v1h-1zM9 9h1v1h-1zM10 9h1v1h-1zM8 10h1v1h-1zM9 10h1v1h-1zM10 10h1v1h-1zM11 10h1v1h-1z" fill="#107010"/></svg>
<div class="a t" style="left:22px;top:963px;">地基处理</div>
<div class="a" style="left:396px;top:855px;width:16px;height:125px;background:repeating-conic-gradient(#F4F4F4 0 25%,#E8E8E8 0 50%) 0 0/2px 2px"></div>
<svg style="left:400px;top:862px" width="8" height="4"><path d="M0 4H8L4 0Z" fill="#000"/></svg>
<div class="a" style="left:397px;top:873px;width:14px;height:12px;background:#F0F0F0;border:1px solid #9A9A9A;border-radius:2px"></div>
<div class="a" style="left:401px;top:876px;width:6px;height:1px;background:#555"></div>
<div class="a" style="left:401px;top:878px;width:6px;height:1px;background:#555"></div>
<div class="a" style="left:401px;top:880px;width:6px;height:1px;background:#555"></div>
<svg style="left:400px;top:969px" width="8" height="4"><path d="M0 0H8L4 4Z" fill="#000"/></svg>
<div class="a" style="left:0px;top:981px;width:414px;height:2px;background:#fff"></div>
<div class="a" style="left:0px;top:983px;width:414px;height:1px;background:#9A9A9A"></div>
<div class="a" style="left:414px;top:40px;width:1px;height:950px;background:#A0A0A0"></div>
<div class="a" style="left:415px;top:40px;width:2px;height:950px;background:#F4F7FC"></div>
<div class="a" style="left:417px;top:40px;width:4px;height:950px;background:#C4D3EE"></div>
<div class="a" style="left:421px;top:40px;width:1px;height:950px;background:#fff"></div>
<div class="a" style="left:422px;top:40px;width:2px;height:950px;background:#A0A0A0"></div>
<div class="a" style="left:424px;top:40px;width:12px;height:950px;background:#C8D6F0"></div>
<div class="a" style="left:424px;top:330px;width:7px;height:368px;background:linear-gradient(90deg,#fff,#fff 40%,#C7DAF2);border-radius:3px 3px 0 0;border-top:1px solid #9AB"></div>
<div class="a" style="left:431px;top:40px;width:1px;height:950px;background:#A0A0A0"></div>
<svg style="left:425px;top:512px" width="5" height="7"><path d="M4.5 0.5L1 3.5L4.5 6.5" stroke="#000" stroke-width="1.4" fill="none"/></svg>
<div class="a" style="left:435px;top:44px;width:1px;height:925px;background:#808080"></div>
<div class="a" style="left:436px;top:44px;width:1472px;height:1px;background:#A0A0A0"></div>
<div class="a" style="left:436px;top:45px;width:1472px;height:1px;background:#fff"></div>
<div class="a" style="left:436px;top:68px;width:1472px;height:1px;background:#A0A0A0"></div>
<div class="a" style="left:436px;top:69px;width:1472px;height:1px;background:#F4F6FA"></div>
<div class="a" style="left:436px;top:93px;width:1472px;height:1px;background:#A0A0A0"></div>
<div class="a" style="left:436px;top:94px;width:1472px;height:1px;background:#F4F6FA"></div>
<div class="a" style="left:446px;top:95px;width:1462px;height:1px;background:#fff"></div>
<div class="a" style="left:436px;top:117px;width:1472px;height:1px;background:#A0A0A0"></div>
<div class="a" style="left:436px;top:118px;width:1472px;height:1px;background:#fff"></div>
<div class="a" style="left:439px;top:48px;width:2px;height:17px;background:#fff;border-right:1px solid #9DA6B8;width:3px"></div>
<div class="a" style="left:439px;top:72px;width:2px;height:17px;background:#fff;border-right:1px solid #9DA6B8;width:3px"></div>
<div class="a" style="left:439px;top:97px;width:2px;height:17px;background:#fff;border-right:1px solid #9DA6B8;width:3px"></div>
<div class="a" style="left:526px;top:48px;width:2px;height:18px;background:#9DA6B8;border-right:1px solid #fff;width:2px"></div>
<div class="a" style="left:580px;top:48px;width:2px;height:18px;background:#9DA6B8;border-right:1px solid #fff;width:2px"></div>
<div class="a" style="left:676px;top:48px;width:2px;height:18px;background:#9DA6B8;border-right:1px solid #fff;width:2px"></div>
<div class="a" style="left:896px;top:48px;width:2px;height:18px;background:#9DA6B8;border-right:1px solid #fff;width:2px"></div>
<div class="a" style="left:954px;top:48px;width:2px;height:18px;background:#9DA6B8;border-right:1px solid #fff;width:2px"></div>
<div class="a" style="left:988px;top:48px;width:2px;height:18px;background:#9DA6B8;border-right:1px solid #fff;width:2px"></div>
<div class="a" style="left:1022px;top:48px;width:2px;height:18px;background:#9DA6B8;border-right:1px solid #fff;width:2px"></div>
<div class="a" style="left:1159px;top:48px;width:2px;height:18px;background:#9DA6B8;border-right:1px solid #fff;width:2px"></div>
<div class="a" style="left:672px;top:73px;width:2px;height:18px;background:#9DA6B8;border-right:1px solid #fff;width:2px"></div>
<div class="a" style="left:752px;top:73px;width:2px;height:18px;background:#9DA6B8;border-right:1px solid #fff;width:2px"></div>
<div class="a" style="left:796px;top:73px;width:2px;height:18px;background:#9DA6B8;border-right:1px solid #fff;width:2px"></div>
<div class="a" style="left:866px;top:73px;width:2px;height:18px;background:#9DA6B8;border-right:1px solid #fff;width:2px"></div>
<div class="a" style="left:938px;top:73px;width:2px;height:18px;background:#9DA6B8;border-right:1px solid #fff;width:2px"></div>
<div class="a" style="left:583px;top:48px;width:91px;height:18px;background:#fff;border:1px solid #B8C0CC"></div>
<div class="a" style="left:657px;top:50px;width:15px;height:14px;background:#EDEDED"></div>
<svg style="left:660px;top:55px" width="9" height="5"><path d="M0 0H9L4.5 5Z" fill="#000"/></svg>
<svg style="left:587px;top:51px" width="12" height="12" viewBox="0 0 12 12"><path d="M0.5 1H7.5M4 1V7" stroke="#8A96A8" stroke-width="1.4"/><path d="M3 4H11.5M7 4V11M5 11H9.5M3 4V6M11.5 4V6" stroke="#000" stroke-width="1.8"/></svg>
<div class="a t" style="left:603px;top:51px;">仿宋</div>
<div class="a" style="left:679px;top:48px;width:59px;height:18px;background:#fff;border:1px solid #B8C0CC"></div>
<div class="a" style="left:721px;top:50px;width:15px;height:14px;background:#EDEDED"></div>
<svg style="left:724px;top:55px" width="9" height="5"><path d="M0 0H9L4.5 5Z" fill="#000"/></svg>
<div class="a t" style="left:681px;top:51px;"><i class="m">10</i></div>
<div class="a" style="left:869px;top:73px;width:66px;height:18px;background:#fff;border:1px solid #B8C0CC"></div>
<div class="a" style="left:919px;top:75px;width:15px;height:14px;background:#EDEDED"></div>
<svg style="left:922px;top:80px" width="9" height="5"><path d="M0 0H9L4.5 5Z" fill="#000"/></svg>
<div class="a t" style="left:872px;top:76px;"><i class="m">100%</i></div>
<div class="a" style="left:941px;top:73px;width:80px;height:18px;background:#fff;border:1px solid #B8C0CC"></div>
<div class="a" style="left:1005px;top:75px;width:15px;height:14px;background:#EDEDED"></div>
<svg style="left:1008px;top:80px" width="9" height="5"><path d="M0 0H9L4.5 5Z" fill="#000"/></svg>
<div class="a" style="left:947px;top:80px;width:54px;height:1px;background:#000"></div>
<svg style="left:782px;top:80px" width="9" height="5"><path d="M0 0H9L4.5 5Z" fill="#000"/></svg>
<svg style="left:852px;top:80px" width="9" height="5"><path d="M0 0H9L4.5 5Z" fill="#000"/></svg>
<svg style="left:1050px;top:80px" width="9" height="5"><path d="M0 0H9L4.5 5Z" fill="#000"/></svg>
<svg style="left:1093px;top:80px" width="9" height="5"><path d="M0 0H9L4.5 5Z" fill="#000"/></svg>
<svg style="left:750px;top:105px" width="9" height="5"><path d="M0 0H9L4.5 5Z" fill="#000"/></svg>
<svg style="left:451px;top:50px" width="16" height="14" viewBox="0 0 16 14"><path d="M0.5 0.5H6L8.5 3V10.5H0.5Z" fill="#fff" stroke="#000"/><path d="M2 3.5H5M2 5.5H7M2 7.5H7" stroke="#000"/><path d="M6.5 4.5H11.5L14.5 7.5V13.5H6.5Z" fill="#fff" stroke="#1020A0" stroke-width="1.2"/><path d="M8 8.5H11M8 10.5H13M8 12.5H13" stroke="#1020A0"/></svg>
<svg style="left:480px;top:50px" width="11" height="14" viewBox="0 0 11 14"><path d="M3 0L6 8M8 0L5 8" stroke="#000" stroke-width="1"/><circle cx="3" cy="11" r="2.2" fill="none" stroke="#1A2AB0" stroke-width="1.2"/><circle cx="8" cy="11" r="2.2" fill="none" stroke="#1A2AB0" stroke-width="1.2"/></svg>
<svg style="left:502px;top:50px" width="17" height="15" viewBox="0 0 17 15"><rect x="0.5" y="1.5" width="12" height="12" fill="#8A6A40" stroke="#000"/><rect x="4" y="0.5" width="5" height="3" fill="#F0E060" stroke="#000" stroke-width="0.7"/><rect x="6.5" y="7" width="9.5" height="7.5" fill="#fff" stroke="#1020A0" stroke-width="1.2"/><path d="M8 10H12" stroke="#1020A0"/></svg>
<svg style="left:533px;top:52px" width="14" height="9" viewBox="0 0 14 9"><path d="M3 4Q6 1 10 2Q13 4 11 8" stroke="#B0B0B0" stroke-width="1.6" fill="none"/><path d="M0 6L1 1L5 5Z" fill="#B0B0B0"/></svg>
<svg style="left:560px;top:52px" width="14" height="9" viewBox="0 0 14 9"><path d="M11 4Q8 1 4 2Q1 4 3 8" stroke="#B0B0B0" stroke-width="1.6" fill="none"/><path d="M14 6L13 1L9 5Z" fill="#B0B0B0"/></svg>
<svg style="left:743px;top:49px" width="17" height="16" viewBox="0 0 17 16"><path d="M5 2L7 0H13V10L11 12H5Z" fill="#E8B830" stroke="#000" stroke-width="0.7"/><path d="M8 4V10" stroke="#1A2AB0"/><path d="M0 10L5 6V14Z" fill="#1A3AB0"/><ellipse cx="11" cy="12" rx="5" ry="3.8" fill="#30B8F0"/><ellipse cx="12" cy="10" rx="3" ry="2" fill="#fff"/></svg>
<svg style="left:773px;top:52px" width="10" height="9" viewBox="0 0 10 9"><text x="0" y="9" font-family="Liberation Serif" font-weight="bold" font-size="12">B</text></svg>
<svg style="left:797px;top:52px" width="13" height="9" viewBox="0 0 13 9"><path d="M4 8.5H0.5M13 0.5H9M10.5 0.5L3 8.5" stroke="#000" stroke-width="2"/></svg>
<svg style="left:824px;top:52px" width="10" height="11" viewBox="0 0 10 11"><path d="M1 0.5H4M6 0.5H9M2.5 0.5V6Q2.5 8.5 5 8.5Q7.5 8.5 7.5 6V0.5" stroke="#000" stroke-width="1.8" fill="none"/><path d="M0 10.5H10" stroke="#000"/></svg>
<svg style="left:849px;top:49px" width="14" height="16" viewBox="0 0 14 16"><path d="M1 7L6 2L11 7L6 12Z" fill="#fff" stroke="#000"/><path d="M6 2V0M9 3Q13 5 12 9" stroke="#1A2AB0" stroke-width="1.5" fill="none"/><rect x="0" y="14" width="13" height="2" fill="#A0A0A0"/></svg>
<svg style="left:877px;top:51px" width="10" height="14" viewBox="0 0 10 14"><path d="M0.5 10L5 0.5L9.5 10M2.5 6.5H7.5" stroke="#000" stroke-width="1.7" fill="none"/><rect x="0" y="11.5" width="10" height="2" fill="#E81010"/></svg>
<svg style="left:906px;top:52px" width="10" height="10" viewBox="0 0 10 10"><path d="M5 0V10M0 5H10" stroke="#000" stroke-width="2"/></svg>
<svg style="left:931px;top:56px" width="11" height="2" viewBox="0 0 11 2"><rect width="11" height="2" fill="#000"/></svg>
<svg style="left:964px;top:51px" width="14" height="12" viewBox="0 0 14 12"><text x="0" y="11" font-family="Liberation Serif" font-style="italic" font-size="13" fill="#C08020">b</text><text x="8" y="6" font-family="Liberation Sans" font-size="7" fill="#C08020">2</text></svg>
<svg style="left:996px;top:49px" width="18" height="16" viewBox="0 0 18 16"><path d="M5 0.5H12L17 5V11L12 15.5H5L0.5 11V5Z" fill="none" stroke="#000" stroke-width="1.1"/><text x="3" y="12" font-family="Liberation Sans" font-size="9" letter-spacing="-0.5">1/a</text></svg>
<div class="a" style="left:1025px;top:45px;width:25px;height:22px;background:#E4E9F2;border:1px solid #C0C8D8"></div>
<div class="a" style="left:1051px;top:45px;width:25px;height:22px;background:#E4E9F2;border:1px solid #C0C8D8"></div>
<div class="a" style="left:1163px;top:45px;width:25px;height:22px;background:#E4E9F2;border:1px solid #C0C8D8"></div>
<svg style="left:1031px;top:51px" width="15" height="14" viewBox="0 0 15 14"><rect x="0.8" y="0.8" width="13.4" height="12.4" fill="none" stroke="#000" stroke-width="1.5"/><path d="M3 4H12M3 6.5H12M3 9H8" stroke="#000" stroke-width="1.3"/><path d="M7 9V12" stroke="#000"/></svg>
<svg style="left:1058px;top:51px" width="14" height="13" viewBox="0 0 14 13"><path d="M0 1H14M0 4.5H10M0 8H14M0 11.5H10" stroke="#000" stroke-width="1.5"/></svg>
<svg style="left:1082px;top:51px" width="15" height="13" viewBox="0 0 15 13"><path d="M0 1H15M3 4.5H12M0 8H15M3 11.5H12" stroke="#000" stroke-width="1.5"/></svg>
<svg style="left:1109px;top:51px" width="15" height="13" viewBox="0 0 15 13"><path d="M0 1H15M5 4.5H15M0 8H15M5 11.5H15" stroke="#000" stroke-width="1.5"/></svg>
<svg style="left:1135px;top:51px" width="14" height="13" viewBox="0 0 14 13"><path d="M0 1H14M0 4.5H5M9 4.5H14M0 8H14M0 11.5H14" stroke="#000" stroke-width="1.5"/><path d="M0.5 1V12M13.5 1V12" stroke="#000"/></svg>
<svg style="left:1171px;top:51px" width="14" height="13" viewBox="0 0 14 13"><path d="M1 0V13M3.5 0V13M6 0V13M8.5 0V13M11 0V13M13 0V13" stroke="#000" stroke-width="1.4"/></svg>
<svg style="left:1196px;top:51px" width="14" height="13" viewBox="0 0 14 13"><path d="M1 0V13M4 0V13M7 2V11M10 0V13M13 0V13" stroke="#000" stroke-width="1.4"/></svg>
<svg style="left:1222px;top:51px" width="14" height="13" viewBox="0 0 14 13"><path d="M1 0V13M4 2V13M6.5 0V13M9 2V13M12 0V13" stroke="#000" stroke-width="1.4"/></svg>
<div class="a" style="left:500px;top:73px;width:16px;height:16px;background:#C4C4C4"></div>
<svg style="left:449px;top:73px" width="17" height="16" viewBox="0 0 17 16"><rect x="0.5" y="0.5" width="7" height="3" fill="#FFF000" stroke="#000"/><rect x="0.5" y="11.5" width="7" height="3" fill="#FFF000" stroke="#000"/><path d="M9 7.5H16M11 4.5H16M11 10.5H16M11 4.5V10.5" stroke="#000" stroke-width="1.2" fill="none"/><path d="M7 7.5L10 5V10Z" fill="#1A2AB0"/></svg>
<svg style="left:474px;top:73px" width="15" height="16" viewBox="0 0 15 16"><rect x="0.5" y="0.5" width="14" height="8" fill="#fff" stroke="#000" stroke-width="1.2"/><path d="M0.5 4.5H14.5M4.5 0.5V8.5" stroke="#000"/><path d="M5 4L10 8H5Z" fill="#FFF000"/><path d="M5 15V10L7.5 8L10 10V15" stroke="#000" stroke-width="1.4" fill="none"/></svg>
<svg style="left:500px;top:73px" width="17" height="16" viewBox="0 0 17 16"><rect x="0.5" y="1.5" width="8" height="3" fill="#FFF000" stroke="#000"/><rect x="0.5" y="5.5" width="8" height="3" fill="#E0E0E0" stroke="#000"/><rect x="0.5" y="9.5" width="8" height="3" fill="#FFF000" stroke="#000"/><path d="M8 7H14" stroke="#000" stroke-width="1.2"/><path d="M17 7L13 4V10Z" fill="#1A2AB0"/></svg>
<svg style="left:526px;top:73px" width="13" height="15" viewBox="0 0 13 15"><rect x="0.5" y="0.5" width="3" height="4" fill="#FFF000" stroke="#000"/><rect x="9.5" y="0.5" width="3" height="4" fill="#FFF000" stroke="#000"/><path d="M4 15V9H9V15" stroke="#000" stroke-width="1.4" fill="none"/><path d="M6.5 3L3.5 7H9.5Z" fill="#1A2AB0"/><path d="M6.5 6V9" stroke="#1A2AB0"/></svg>
<svg style="left:550px;top:73px" width="15" height="16" viewBox="0 0 15 16"><rect x="0.5" y="0.5" width="8" height="14" fill="#FFF000" stroke="#000" stroke-width="1.2"/><path d="M4.5 0.5V14.5M0.5 4.5H8.5" stroke="#000"/><path d="M8 8H15M10 5H15M10 11H15" stroke="#000" stroke-width="1.2"/><path d="M6 8L9 6V10Z" fill="#E01010"/></svg>
<svg style="left:576px;top:73px" width="13" height="15" viewBox="0 0 13 15"><path d="M0.5 0.5V5.5H12.5V0.5" stroke="#000" stroke-width="1.3" fill="none"/><rect x="2" y="1" width="3" height="4" fill="#FFF000"/><rect x="8" y="1" width="3" height="4" fill="#FFF000"/><path d="M6.5 5.5V11" stroke="#000" stroke-width="1.3"/><path d="M6.5 15L3 11H10Z" fill="#1A2AB0"/></svg>
<svg style="left:602px;top:74px" width="15" height="15" viewBox="0 0 15 15"><rect x="0.5" y="0.5" width="10" height="6" fill="#B8B8B8" stroke="#A0A0A0"/><rect x="0.5" y="8.5" width="10" height="5" fill="#C8C8C8" stroke="#A0A0A0"/><path d="M12 3V12H10" stroke="#A8A8A8" fill="none"/></svg>
<svg style="left:627px;top:74px" width="14" height="15" viewBox="0 0 14 15"><rect x="0.5" y="0.5" width="9" height="4" fill="#FFF000" stroke="#000" stroke-width="1.2"/><rect x="0.5" y="6.5" width="9" height="7" fill="#000"/><path d="M2 8H3M5 8H6M8 8H9M2 11H3M5 11H6M8 11H9" stroke="#FFF000" stroke-width="1.5"/><path d="M11 3V12H9" stroke="#000" fill="none"/></svg>
<svg style="left:652px;top:74px" width="12" height="13" viewBox="0 0 12 13"><path d="M3 6V3Q3 0.5 6 0.5Q9 0.5 9 3V6" stroke="#000" stroke-width="1.4" fill="none"/><rect x="0.5" y="5.5" width="11" height="7" fill="#FFF000" stroke="#000" stroke-width="1.2"/><rect x="5" y="7" width="2" height="4" fill="#1A2AB0"/></svg>
<svg style="left:680px;top:74px" width="14" height="15" viewBox="0 0 14 15"><path d="M2.5 0L0 3H5ZM2.5 15L0 12H5Z" fill="#4A70C0"/><path d="M2.5 3V12" stroke="#4A70C0"/><path d="M7 3H14M7 7H14M7 11H14" stroke="#000" stroke-width="1.4"/></svg>
<svg style="left:705px;top:74px" width="14" height="15" viewBox="0 0 14 15"><path d="M2.5 6L0 3H5ZM2.5 9L0 12H5Z" fill="#B0B0B0"/><path d="M2.5 0V15" stroke="#B0B0B0"/><path d="M7 3H14M7 7H14M7 11H14" stroke="#B0B0B0" stroke-width="1.4"/></svg>
<svg style="left:731px;top:74px" width="14" height="15" viewBox="0 0 14 15"><path d="M1 1L13 13" stroke="#B8B8B8" stroke-width="1.2"/><circle cx="5" cy="5" r="2" fill="none" stroke="#B8B8B8"/><circle cx="10" cy="11" r="2" fill="none" stroke="#B8B8B8"/></svg>
<svg style="left:756px;top:73px" width="17" height="16" viewBox="0 0 17 16"><path d="M0 0L4 3L0 6Z" fill="#000"/><rect x="3.5" y="4.5" width="12" height="11" fill="#FFF060" stroke="#000" stroke-width="1.4"/><path d="M4 15L8 10L11 13L15 11V15Z" fill="#909090"/><circle cx="12" cy="7.5" r="1.3" fill="none" stroke="#000"/></svg>
<svg style="left:802px;top:73px" width="17" height="16" viewBox="0 0 17 16"><rect x="6.5" y="3.5" width="10" height="12" fill="#fff" stroke="#000" stroke-width="1.2"/><rect x="7" y="3" width="10" height="2" fill="#1A2AB0"/><path d="M10 8H14V10H10ZM10 12H14" stroke="#000" fill="none"/><path d="M7 0L2 8H6L1 15L10 6H6L9 0Z" fill="#F0F000" stroke="#202000" stroke-width="0.5"/></svg>
<svg style="left:829px;top:77px" width="10" height="9" viewBox="0 0 10 9"><path d="M9 0.8H0.8L5 4.5L0.8 8.2H9" stroke="#000" stroke-width="1.5" fill="none"/></svg>
<svg style="left:1026px;top:74px" width="15" height="15" viewBox="0 0 15 15"><rect x="1" y="1" width="13" height="13" fill="#fff" stroke="#1A70D0" stroke-width="2"/><path d="M1 1L14 14" stroke="#1A2A7A" stroke-width="1.6"/></svg>
<svg style="left:1069px;top:74px" width="15" height="15" viewBox="0 0 15 15"><rect x="1" y="1" width="13" height="13" fill="none" stroke="#1A70D0" stroke-width="2"/><path d="M2 2L13 13" stroke="#C0B8B0" stroke-width="1.2"/></svg>
<svg style="left:452px;top:98px" width="13" height="15" viewBox="0 0 13 15"><text x="0" y="6" font-family="Liberation Serif" font-size="8">1</text><text x="4" y="10" font-family="Liberation Serif" font-size="8">2</text><text x="8" y="14" font-family="Liberation Serif" font-size="8">3</text></svg>
<svg style="left:529px;top:100px" width="11" height="13" viewBox="0 0 11 13"><path d="M0 6.5H11" stroke="#000" stroke-width="1.3"/><path d="M5.5 0V13" stroke="#000" stroke-width="2"/><path d="M3 3Q1 3 1 6.5Q1 10 3 10M8 3Q10 3 10 6.5Q10 10 8 10" stroke="#000" stroke-width="1.4" fill="none"/></svg>
<svg style="left:602px;top:100px" width="15" height="14" viewBox="0 0 15 14"><text x="0" y="13" font-family="Liberation Sans" font-size="15" transform="scale(0.75,1)" fill="#102010">NO</text></svg>
<svg style="left:677px;top:100px" width="14" height="14" viewBox="0 0 14 14"><path d="M3 1H7Q12 1 12 7Q12 13 7 13H3Z" fill="none" stroke="#000" stroke-width="2.2"/><path d="M0 5.5H14M0 8.5H14" stroke="#000" stroke-width="1.2"/></svg>
<svg style="left:768px;top:98px" width="15" height="17" viewBox="0 0 15 17"><path d="M1 3L10 1L13 12L4 15Z" fill="#F0D880" stroke="#C0A040"/><path d="M3 5H9M3.5 8H9.5" stroke="#C08030"/><path d="M5 12L8 15L14 8" stroke="#609050" stroke-width="2.4" fill="none"/></svg>
<div class="a t" style="left:469px;top:101px;">随机数</div>
<div class="a t" style="left:544px;top:101px;">特殊符号</div>
<div class="a t" style="left:619px;top:101px;">重新编号</div>
<div class="a t" style="left:694px;top:101px;">画删除线</div>
<div class="a t" style="left:786px;top:101px;">填表说明</div>
<div class="a" style="left:436px;top:119px;width:1457px;height:850px;background:#F0F0F0"></div>
<div class="a" style="left:1179px;top:139px;width:3px;height:830px;background:#E2E2E2"></div>
<div class="a" style="left:436px;top:119px;width:1457px;height:1px;background:#808080"></div>
<div class="a" style="left:436px;top:120px;width:743px;height:19px;background:#F0F0F0"></div>
<div class="a" style="left:436px;top:138px;width:743px;height:1px;background:#C8C8C8"></div>
<div class="a" style="left:511px;top:121px;width:1px;height:18px;background:#C9C0AE"></div>
<div class="a" style="left:473px;top:124px;width:38px;text-align:center;font:bold 12px/12px 'Liberation Serif',serif">B</div>
<div class="a" style="left:544px;top:121px;width:1px;height:18px;background:#C9C0AE"></div>
<div class="a" style="left:511px;top:124px;width:33px;text-align:center;font:bold 12px/12px 'Liberation Serif',serif">C</div>
<div class="a" style="left:577px;top:121px;width:1px;height:18px;background:#C9C0AE"></div>
<div class="a" style="left:544px;top:124px;width:33px;text-align:center;font:bold 12px/12px 'Liberation Serif',serif">D</div>
<div class="a" style="left:617px;top:121px;width:1px;height:18px;background:#C9C0AE"></div>
<div class="a" style="left:577px;top:124px;width:40px;text-align:center;font:bold 12px/12px 'Liberation Serif',serif">E</div>
<div class="a" style="left:657px;top:121px;width:1px;height:18px;background:#C9C0AE"></div>
<div class="a" style="left:617px;top:124px;width:40px;text-align:center;font:bold 12px/12px 'Liberation Serif',serif">F</div>
<div class="a" style="left:697px;top:121px;width:1px;height:18px;background:#C9C0AE"></div>
<div class="a" style="left:657px;top:124px;width:40px;text-align:center;font:bold 12px/12px 'Liberation Serif',serif">G</div>
<div class="a" style="left:729px;top:121px;width:1px;height:18px;background:#C9C0AE"></div>
<div class="a" style="left:697px;top:124px;width:32px;text-align:center;font:bold 12px/12px 'Liberation Serif',serif">H</div>
<div class="a" style="left:761px;top:121px;width:1px;height:18px;background:#C9C0AE"></div>
<div class="a" style="left:729px;top:124px;width:32px;text-align:center;font:bold 12px/12px 'Liberation Serif',serif">I</div>
<div class="a" style="left:793px;top:121px;width:1px;height:18px;background:#C9C0AE"></div>
<div class="a" style="left:761px;top:124px;width:32px;text-align:center;font:bold 12px/12px 'Liberation Serif',serif">J</div>
<div class="a" style="left:825px;top:121px;width:1px;height:18px;background:#C9C0AE"></div>
<div class="a" style="left:793px;top:124px;width:32px;text-align:center;font:bold 12px/12px 'Liberation Serif',serif">K</div>
<div class="a" style="left:857px;top:121px;width:1px;height:18px;background:#C9C0AE"></div>
<div class="a" style="left:825px;top:124px;width:32px;text-align:center;font:bold 12px/12px 'Liberation Serif',serif">L</div>
<div class="a" style="left:889px;top:121px;width:1px;height:18px;background:#C9C0AE"></div>
<div class="a" style="left:857px;top:124px;width:32px;text-align:center;font:bold 12px/12px 'Liberation Serif',serif">M</div>
<div class="a" style="left:921px;top:121px;width:1px;height:18px;background:#C9C0AE"></div>
<div class="a" style="left:889px;top:124px;width:32px;text-align:center;font:bold 12px/12px 'Liberation Serif',serif">N</div>
<div class="a" style="left:953px;top:121px;width:1px;height:18px;background:#C9C0AE"></div>
<div class="a" style="left:921px;top:124px;width:32px;text-align:center;font:bold 12px/12px 'Liberation Serif',serif">O</div>
<div class="a" style="left:985px;top:121px;width:1px;height:18px;background:#C9C0AE"></div>
<div class="a" style="left:953px;top:124px;width:32px;text-align:center;font:bold 12px/12px 'Liberation Serif',serif">P</div>
<div class="a" style="left:1017px;top:121px;width:1px;height:18px;background:#C9C0AE"></div>
<div class="a" style="left:985px;top:124px;width:32px;text-align:center;font:bold 12px/12px 'Liberation Serif',serif">Q</div>
<div class="a" style="left:1049px;top:121px;width:1px;height:18px;background:#C9C0AE"></div>
<div class="a" style="left:1017px;top:124px;width:32px;text-align:center;font:bold 12px/12px 'Liberation Serif',serif">R</div>
<div class="a" style="left:1081px;top:121px;width:1px;height:18px;background:#C9C0AE"></div>
<div class="a" style="left:1049px;top:124px;width:32px;text-align:center;font:bold 12px/12px 'Liberation Serif',serif">S</div>
<div class="a" style="left:1113px;top:121px;width:1px;height:18px;background:#C9C0AE"></div>
<div class="a" style="left:1081px;top:124px;width:32px;text-align:center;font:bold 12px/12px 'Liberation Serif',serif">T</div>
<div class="a" style="left:1145px;top:121px;width:1px;height:18px;background:#C9C0AE"></div>
<div class="a" style="left:1113px;top:124px;width:32px;text-align:center;font:bold 12px/12px 'Liberation Serif',serif">U</div>
<div class="a" style="left:1178px;top:121px;width:1px;height:18px;background:#C9C0AE"></div>
<div class="a" style="left:1145px;top:124px;width:33px;text-align:center;font:bold 12px/12px 'Liberation Serif',serif">V</div>
<div class="a" style="left:1178px;top:121px;width:4px;height:18px;background:#E4E4E4;border-left:1px solid #C9C0AE"></div>
<div class="a" style="left:468px;top:121px;width:1px;height:18px;background:#A0A0A0"></div>
<svg style="left:456px;top:127px" width="14" height="12"><path d="M0 11.5L11 0.5M4 11.5L12 3.5M8 11.5L12 7.5" stroke="#B8B8B8" stroke-width="1.2" fill="none"/></svg>
<div class="a" style="left:436px;top:139px;width:32px;height:830px;background:#F0F0F0"></div>
<div class="a" style="left:468px;top:139px;width:1px;height:830px;background:#A0A0A0"></div>
<div class="a" style="left:469px;top:139px;width:4px;height:830px;background:#E2E2E2"></div>
<div class="a" style="left:436px;top:139px;width:32px;height:5px;background:#F0F0F0"></div>
<div class="a" style="left:436px;top:143px;width:32px;height:1px;background:#A8A8A8"></div>
<div class="a" style="left:452px;top:141px;width:1px;height:2px;background:#000"></div>
<div class="a" style="left:436px;top:185px;width:32px;height:1px;background:#C9C0AE"></div>
<div class="a" style="left:436px;top:159px;width:32px;text-align:center;font:normal 12px/12px 'Liberation Serif',serif">2</div>
<div class="a" style="left:436px;top:218px;width:32px;height:1px;background:#C9C0AE"></div>
<div class="a" style="left:436px;top:196px;width:32px;text-align:center;font:normal 12px/12px 'Liberation Serif',serif">3</div>
<div class="a" style="left:436px;top:268px;width:32px;height:1px;background:#C9C0AE"></div>
<div class="a" style="left:436px;top:238px;width:32px;text-align:center;font:normal 12px/12px 'Liberation Serif',serif">4</div>
<div class="a" style="left:436px;top:318px;width:32px;height:1px;background:#C9C0AE"></div>
<div class="a" style="left:436px;top:288px;width:32px;text-align:center;font:normal 12px/12px 'Liberation Serif',serif">5</div>
<div class="a" style="left:436px;top:367px;width:32px;height:1px;background:#C9C0AE"></div>
<div class="a" style="left:436px;top:337px;width:32px;text-align:center;font:normal 12px/12px 'Liberation Serif',serif">6</div>
<div class="a" style="left:436px;top:417px;width:32px;height:1px;background:#C9C0AE"></div>
<div class="a" style="left:436px;top:387px;width:32px;text-align:center;font:normal 12px/12px 'Liberation Serif',serif">7</div>
<div class="a" style="left:436px;top:453px;width:32px;height:1px;background:#C9C0AE"></div>
<div class="a" style="left:436px;top:430px;width:32px;text-align:center;font:normal 12px/12px 'Liberation Serif',serif">8</div>
<div class="a" style="left:436px;top:518px;width:32px;height:1px;background:#C9C0AE"></div>
<div class="a" style="left:436px;top:480px;width:32px;text-align:center;font:bold 12px/12px 'Liberation Serif',serif">9</div>
<div class="a" style="left:436px;top:583px;width:32px;height:1px;background:#C9C0AE"></div>
<div class="a" style="left:436px;top:545px;width:32px;text-align:center;font:bold 12px/12px 'Liberation Serif',serif">10</div>
<div class="a" style="left:436px;top:649px;width:32px;height:1px;background:#C9C0AE"></div>
<div class="a" style="left:436px;top:611px;width:32px;text-align:center;font:bold 12px/12px 'Liberation Serif',serif">11</div>
<div class="a" style="left:436px;top:690px;width:32px;height:1px;background:#C9C0AE"></div>
<div class="a" style="left:436px;top:664px;width:32px;text-align:center;font:normal 12px/12px 'Liberation Serif',serif">12</div>
<div class="a" style="left:436px;top:731px;width:32px;height:1px;background:#C9C0AE"></div>
<div class="a" style="left:436px;top:705px;width:32px;text-align:center;font:normal 12px/12px 'Liberation Serif',serif">13</div>
<div class="a" style="left:436px;top:798px;width:32px;height:1px;background:#C9C0AE"></div>
<div class="a" style="left:436px;top:759px;width:32px;text-align:center;font:normal 12px/12px 'Liberation Serif',serif">14</div>
<div class="a" style="left:436px;top:865px;width:32px;height:1px;background:#C9C0AE"></div>
<div class="a" style="left:436px;top:826px;width:32px;text-align:center;font:normal 12px/12px 'Liberation Serif',serif">15</div>
<div class="a" style="left:436px;top:932px;width:32px;height:1px;background:#C9C0AE"></div>
<div class="a" style="left:436px;top:893px;width:32px;text-align:center;font:normal 12px/12px 'Liberation Serif',serif">16</div>
<div class="a" style="left:436px;top:949px;width:32px;text-align:center;font:normal 12px/12px 'Liberation Serif',serif">17</div>
<div class="a" style="left:473px;top:144px;width:416px;height:75px;background:#DFDFDF"></div>
<div class="a" style="left:889px;top:144px;width:96px;height:75px;background:#DFDFDF"></div>
<div class="a" style="left:985px;top:144px;width:193px;height:75px;background:#fff"></div>
<div class="a" style="left:473px;top:185px;width:416px;height:1px;background:#EFEFEF"></div>
<div class="a" style="left:473px;top:219px;width:104px;height:50px;background:#DFDFDF"></div>
<div class="a" style="left:577px;top:219px;width:601px;height:50px;background:#F2CBA6"></div>
<div class="a" style="left:473px;top:269px;width:104px;height:50px;background:#DFDFDF"></div>
<div class="a" style="left:577px;top:269px;width:312px;height:50px;background:#F2CBA6"></div>
<div class="a" style="left:889px;top:269px;width:96px;height:50px;background:#DFDFDF"></div>
<div class="a" style="left:985px;top:269px;width:193px;height:50px;background:#F2CBA6"></div>
<div class="a" style="left:473px;top:319px;width:104px;height:49px;background:#DFDFDF"></div>
<div class="a" style="left:577px;top:319px;width:312px;height:49px;background:#fff"></div>
<div class="a" style="left:889px;top:319px;width:96px;height:49px;background:#DFDFDF"></div>
<div class="a" style="left:985px;top:319px;width:193px;height:49px;background:#fff"></div>
<div class="a" style="left:473px;top:368px;width:104px;height:50px;background:#DFDFDF"></div>
<div class="a" style="left:577px;top:368px;width:601px;height:50px;background:#F2CBA6"></div>
<div class="a" style="left:473px;top:418px;width:705px;height:36px;background:#DFDFDF"></div>
<div class="a" style="left:473px;top:454px;width:705px;height:196px;background:#fff"></div>
<div class="a" style="left:473px;top:650px;width:104px;height:41px;background:#DFDFDF"></div>
<div class="a" style="left:577px;top:650px;width:80px;height:41px;background:#fff"></div>
<div class="a" style="left:657px;top:650px;width:521px;height:41px;background:#DFDFDF"></div>
<div class="a" style="left:473px;top:691px;width:705px;height:41px;background:#DFDFDF"></div>
<div class="a" style="left:473px;top:732px;width:705px;height:201px;background:#fff"></div>
<div class="a" style="left:473px;top:933px;width:104px;height:42px;background:#DFDFDF"></div>
<div class="a" style="left:577px;top:933px;width:601px;height:42px;background:#fff"></div>
<div class="a" style="left:697px;top:933px;width:1px;height:36px;background:#E8E8E8"></div>
<div class="a" style="left:472px;top:143px;width:706px;height:2px;background:#000"></div>
<div class="a" style="left:472px;top:143px;width:2px;height:311px;background:#000"></div>
<div class="a" style="left:1176px;top:143px;width:2px;height:311px;background:#000"></div>
<div class="a" style="left:889px;top:144px;width:1px;height:74px;background:#000"></div>
<div class="a" style="left:985px;top:144px;width:1px;height:74px;background:#000"></div>
<div class="a" style="left:577px;top:218px;width:1px;height:200px;background:#000"></div>
<div class="a" style="left:889px;top:268px;width:1px;height:100px;background:#000"></div>
<div class="a" style="left:985px;top:268px;width:1px;height:100px;background:#000"></div>
<div class="a" style="left:474px;top:218px;width:702px;height:1px;background:#000"></div>
<div class="a" style="left:474px;top:268px;width:702px;height:1px;background:#000"></div>
<div class="a" style="left:474px;top:318px;width:702px;height:1px;background:#000"></div>
<div class="a" style="left:474px;top:368px;width:702px;height:1px;background:#000"></div>
<div class="a" style="left:474px;top:418px;width:702px;height:1px;background:#000"></div>
<div class="a" style="left:472px;top:452px;width:706px;height:3px;background:#000"></div>
<div class="a" style="left:474px;top:455px;width:1px;height:194px;background:#000"></div>
<div class="a" style="left:1177px;top:455px;width:1px;height:194px;background:#000"></div>
<div class="a" style="left:472px;top:648px;width:706px;height:3px;background:#000"></div>
<div class="a" style="left:472px;top:650px;width:2px;height:319px;background:#000"></div>
<div class="a" style="left:1176px;top:650px;width:2px;height:319px;background:#000"></div>
<div class="a" style="left:474px;top:690px;width:702px;height:1px;background:#000"></div>
<div class="a" style="left:474px;top:932px;width:702px;height:1px;background:#000"></div>
<div class="a" style="left:1175px;top:646px;width:5px;height:5px;background:#fff;border:1px solid #000"></div>
<div class="a t" style="left:589px;top:154px;font-weight:bold;font-size:21px;line-height:21px;letter-spacing:2px">隐蔽工程验收记录</div>
<div class="a t" style="left:651px;top:189px;font-weight:bold;font-size:14px;line-height:14px">表</div>
<div class="a t" style="left:676px;top:189px;font-weight:bold;font-size:14px;line-height:14px;font-family:'Liberation Mono';letter-spacing:-0.5px">C5-1</div>
<div class="a t" style="left:497px;top:237px;letter-spacing:2.2px">工程名称</div>
<div class="a t" style="left:909px;top:175px;letter-spacing:2.2px">资料编号</div>
<div class="a t" style="left:497px;top:287px;letter-spacing:2.2px">施工单位</div>
<div class="a t" style="left:909px;top:287px;letter-spacing:2.2px">监理单位</div>
<div class="a t" style="left:497px;top:337px;letter-spacing:2.2px">验收项目</div>
<div class="a t" style="left:909px;top:337px;letter-spacing:2.2px">验收日期</div>
<div class="a t" style="left:497px;top:387px;letter-spacing:2.2px">验收部位</div>
<div class="a t" style="left:874px;top:237px;font-family:'Liberation Serif'">1</div>
<div class="a t" style="left:1106px;top:337px;font-weight:300">年</div>
<div class="a t" style="left:1133px;top:337px;font-weight:300">月</div>
<div class="a t" style="left:1162px;top:337px;font-weight:300">日</div>
<div class="a t" style="left:783px;top:387px;letter-spacing:2px;font-weight:300"><i class="m" style="letter-spacing:0px">002-</i>表<i class="m" style="letter-spacing:0px">C5-1&nbsp;</i>隐蔽工程验收记录</div>
<div class="a t" style="left:476px;top:430px;letter-spacing:1.6px">验收内容：</div>
<div class="a t" style="left:492px;top:664px;letter-spacing:2px">附影像资料（</div>
<div class="a t" style="left:661px;top:664px;letter-spacing:2px">）页</div>
<div class="a t" style="left:476px;top:705px;letter-spacing:1.6px">验收意见：</div>
<div class="a t" style="left:505px;top:951px;letter-spacing:2px">验收结论：</div>
<div class="a" style="left:580px;top:949px;width:14px;height:14px;background:#fff;border:2px solid #555"></div>
<div class="a t" style="left:597px;top:951px;letter-spacing:2px">同意隐蔽</div>
<div class="a" style="left:701px;top:949px;width:14px;height:14px;background:#fff;border:2px solid #555"></div>
<div class="a t" style="left:717px;top:951px;letter-spacing:1.9px">不同意，修改后进行复查</div>
<div class="a" style="left:1893px;top:120px;width:15px;height:849px;background:repeating-conic-gradient(#F6F6F6 0 25%,#EAEAEA 0 50%) 0 0/2px 2px;border-left:1px solid #D8D8D8"></div>
<div class="a" style="left:1893px;top:122px;width:15px;height:16px;background:#F0F0F0"></div>
<svg style="left:1896px;top:127px" width="9" height="5"><path d="M0 5H9L4.5 0Z" fill="#000"/></svg>
<div class="a" style="left:1893px;top:138px;width:15px;height:592px;background:#F0F0F0;border-top:2px solid #808080;border-bottom:2px solid #707070;border-left:1px solid #D8D8D8"></div>
<div class="a" style="left:1893px;top:952px;width:15px;height:16px;background:#F0F0F0"></div>
<svg style="left:1896px;top:958px" width="9" height="5"><path d="M0 0H9L4.5 5Z" fill="#000"/></svg>
<div class="a" style="left:436px;top:969px;width:1472px;height:18px;background:#F0F0F0;border-top:1px solid #888;border-bottom:1px solid #707070"></div>
<div class="a" style="left:436px;top:970px;width:17px;height:16px;background:#F0F0F0;border-right:1px solid #A8A8A8;border-left:1px solid #fff"></div>
<div class="a" style="left:452px;top:970px;width:17px;height:16px;background:#F0F0F0;border-right:1px solid #A8A8A8;border-left:1px solid #fff"></div>
<div class="a" style="left:469px;top:970px;width:17px;height:16px;background:#F0F0F0;border-right:1px solid #A8A8A8;border-left:1px solid #fff"></div>
<div class="a" style="left:486px;top:970px;width:17px;height:16px;background:#F0F0F0;border-right:1px solid #A8A8A8;border-left:1px solid #fff"></div>
<svg style="left:436px;top:970px" width="70" height="16"><path d="M4.5 5V13" stroke="#000" stroke-width="1.6"/><path d="M10.5 4.5V13.5L5.5 9Z" fill="#000"/><path d="M27.5 4.5V13.5L22.5 9Z" fill="#000"/><path d="M39.5 4.5V13.5L44.5 9Z" fill="#000"/><path d="M56.5 4.5V13.5L61.5 9Z" fill="#000"/><path d="M62.5 5V13" stroke="#000" stroke-width="1.6"/></svg>
<svg style="left:504px;top:969px" width="130" height="18"><path d="M56 6L59 16M119 16L127 1" fill="none" stroke="#000" stroke-width="1"/><path d="M1 1L9 16.5H51L58.5 1Z" fill="#fff"/><path d="M1 1L9 16.5M51 16.5L58.5 1" fill="none" stroke="#000" stroke-width="1"/></svg>
<div class="a t" style="left:520px;top:971px;">第<i class="m">1</i>页</div>
<div class="a t" style="left:570px;top:971px;">影像资料</div>
<div class="a" style="left:1893px;top:969px;width:15px;height:18px;background:#F0F0F0;border-left:1px solid #D8D8D8"></div>
<svg style="left:1898px;top:975px" width="6" height="6"><path d="M6 0V6H0Z" fill="#000"/></svg>
<div class="a" style="left:0px;top:984px;width:436px;height:5px;background:#C6D5EF"></div>
<div class="a" style="left:436px;top:987px;width:1472px;height:2px;background:#C6D5EF"></div>
<div class="a" style="left:0px;top:988px;width:1908px;height:1px;background:#A8BCE0"></div>
<div class="a" style="left:0px;top:989px;width:1908px;height:1px;background:#fff"></div>
<div class="a" style="left:0px;top:990px;width:1908px;height:1px;background:#A0A0A0"></div>
<div class="a" style="left:0px;top:991px;width:1908px;height:22px;background:#CAD7F0"></div>
<div class="a" style="left:-2px;top:992px;width:273px;height:16px;background:#CAD7F0;border:1px solid #B4B4B4;border-right-color:#E8E8E8;border-bottom-color:#E8E8E8"></div>
<div class="a" style="left:273px;top:992px;width:126px;height:16px;background:#CAD7F0;border:1px solid #B4B4B4;border-right-color:#E8E8E8;border-bottom-color:#E8E8E8"></div>
<div class="a" style="left:401px;top:992px;width:131px;height:16px;background:#CAD7F0;border:1px solid #B4B4B4;border-right-color:#E8E8E8;border-bottom-color:#E8E8E8"></div>
<div class="a" style="left:534px;top:992px;width:98px;height:16px;background:#CAD7F0;border:1px solid #B4B4B4;border-right-color:#E8E8E8;border-bottom-color:#E8E8E8"></div>
<div class="a" style="left:634px;top:992px;width:1085px;height:16px;background:#F0F0F0;border:1px solid #B4B4B4;border-right-color:#E8E8E8;border-bottom-color:#E8E8E8"></div>
<div class="a" style="left:1720px;top:992px;width:190px;height:16px;background:#CAD7F0;border:1px solid #B4B4B4;border-right-color:#E8E8E8;border-bottom-color:#E8E8E8"></div>
<div class="a t" style="left:-3px;top:994px;">筑业软件<i class="m">-</i>您身边的建筑软件<i class="m">&nbsp;www.zhuyew.cn</i></div>
<div class="a t" style="left:277px;top:994px;">当前用户：管理员</div>
<div class="a t" style="left:405px;top:994px;">版本号：<i class="m">10.4.0.116</i></div>
<div class="a t" style="left:1166px;top:995px;color:#1AA0E0;font-size:10px">0%</div>
<div class="a t" style="left:1810px;top:994px;"><i class="m">2019/4/4&nbsp;19:04:2</i></div>
<div class="a" style="left:0px;top:1012px;width:1908px;height:1px;background:#5A7AB0"></div>
<div class="a" style="left:0px;top:1013px;width:1908px;height:3px;background:#4A6466"></div>
<div class="a" style="left:0px;top:1013px;width:70px;height:3px;background:#8A9AA8"></div>
<div class="a" style="left:70px;top:1013px;width:70px;height:3px;background:#5A6A70"></div>
<div class="a" style="left:140px;top:1013px;width:70px;height:3px;background:#A8B0B8"></div>
<div class="a" style="left:210px;top:1013px;width:50px;height:3px;background:#6A8A50"></div>
<div class="a" style="left:260px;top:1013px;width:70px;height:3px;background:#B0B8C0"></div>
<div class="a" style="left:330px;top:1013px;width:70px;height:3px;background:#7090B0"></div>
<div class="a" style="left:400px;top:1013px;width:100px;height:3px;background:#C0C8D0"></div>
<div class="a" style="left:510px;top:1013px;width:110px;height:3px;background:#8898A8"></div>
<div class="a" style="left:640px;top:1013px;width:120px;height:3px;background:#A0A8B0"></div>
<div class="a" style="left:780px;top:1013px;width:120px;height:3px;background:#90A0B0"></div></body></html>
